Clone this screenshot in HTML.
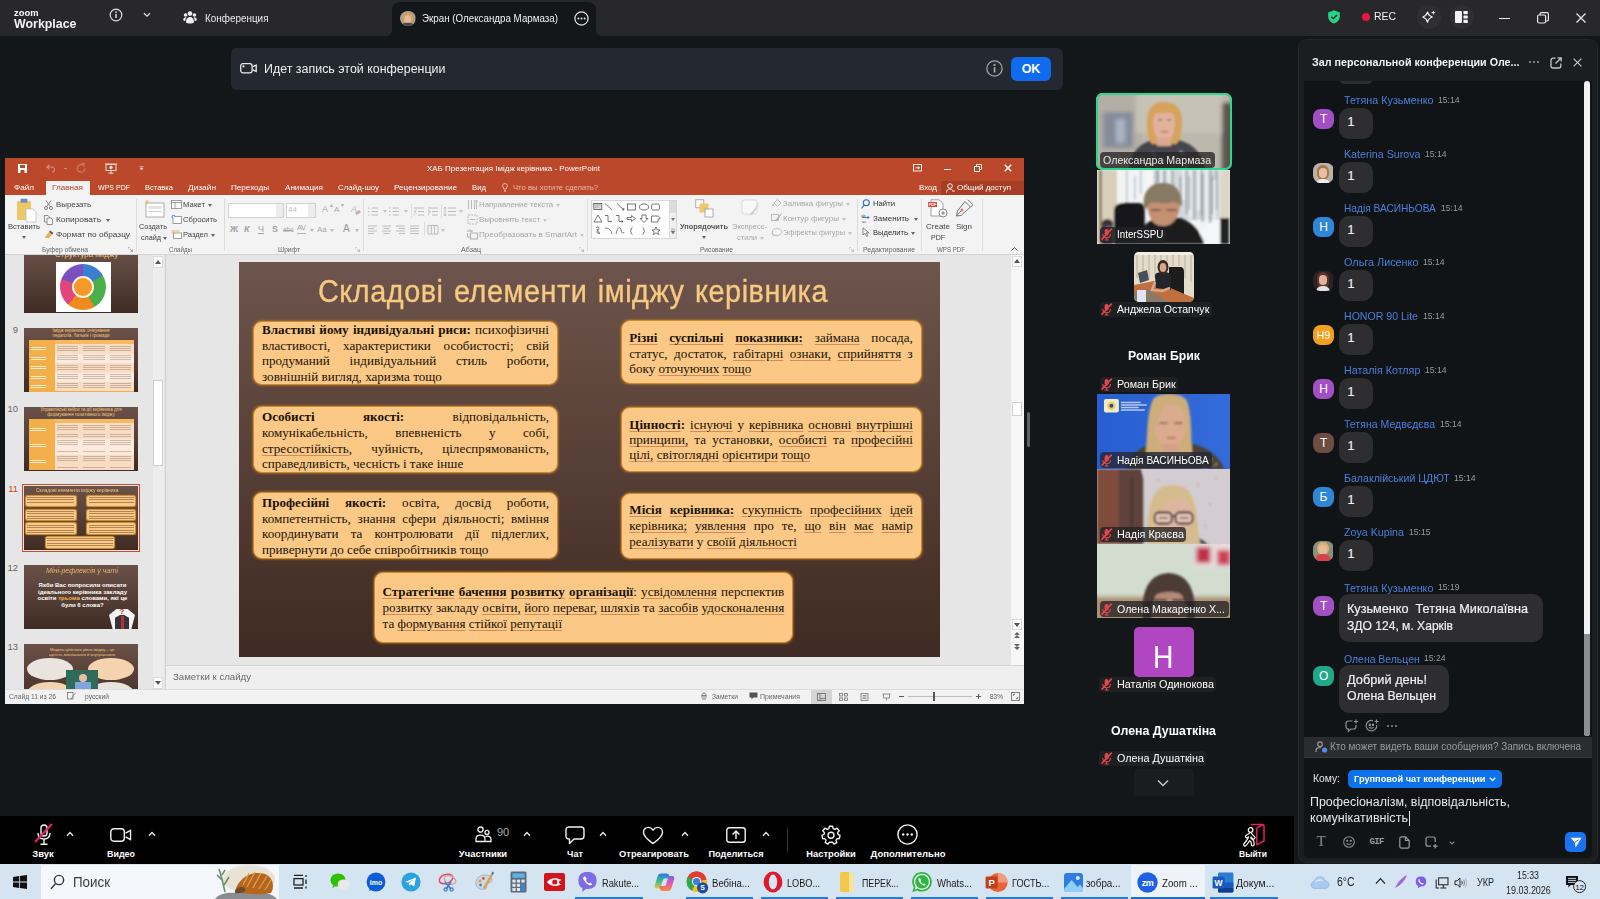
<!DOCTYPE html>
<html lang="ru"><head><meta charset="utf-8"><title>Zoom Workplace</title>
<style>
*{box-sizing:border-box;margin:0;padding:0}
html,body{width:1600px;height:899px;overflow:hidden;background:#14171a}
body{font-family:"Liberation Sans","DejaVu Sans",sans-serif;color:#fff;position:relative}
.a{position:absolute}
.t{position:absolute;white-space:nowrap;line-height:1}
svg{position:absolute;overflow:visible}
/* title bar */
#tb{left:0;top:0;width:1600px;height:36px;background:#28282b}
#tab{left:392px;top:2px;width:204px;height:34px;background:#14171a;border-radius:8px 8px 0 0}
.cb{width:24px;height:24px;border-radius:12px;background:#2f2f33}
/* notification */
#nt{left:231px;top:48px;width:832px;height:42px;background:#242831;border-radius:6px}
#ok{left:1011px;top:57px;width:40px;height:24px;background:#0f6cee;border-radius:6px;font-weight:bold;font-size:12.5px;text-align:center;line-height:25px}
/* bottom */
#bt{left:0;top:816px;width:1294px;height:48px;background:#000}
.bl{position:absolute;top:848px;font-size:9.5px;font-weight:bold;line-height:12px;white-space:nowrap;text-align:center;transform:translateX(-50%)}
#tk{left:0;top:864px;width:1600px;height:35px;background:#d5e4f1}
.tl{position:absolute;top:877px;font-size:10.5px;color:#1a1a1a;line-height:12px;white-space:nowrap}
.ul{position:absolute;top:896.5px;height:2.5px;background:#2a7ad8}
#pp{left:5px;top:158px;width:1019px;height:546px;background:#e6e6e6}
.pw{color:#fff;font-size:8px}
.rb{font-size:8px;color:#444}
.rg{font-size:8px;color:#a6a6a6}
.gl{font-size:7px;color:#666}
.sep{position:absolute;top:199px;width:1px;height:52px;background:#dcdcdc}
.th{position:absolute;left:24px;width:114px;height:64px;background:linear-gradient(#6b5249,#3f2b23);overflow:hidden}
.tn{position:absolute;left:0;width:13px;text-align:right;font-size:9.5px;color:#666;line-height:1}
.bx{position:absolute;background:#fbc985;border:1.5px solid #c98a2e;border-radius:9px;box-shadow:0 0 2px .6px rgba(195,125,38,.55)}
.sl{position:absolute;white-space:nowrap;font-family:"Liberation Serif","DejaVu Serif",serif;font-size:13.1px;line-height:15px;color:#1a1208;text-align:justify;text-align-last:justify}
.sl.e{text-align-last:left}
.sl u{text-decoration:underline;text-decoration-color:rgba(150,50,30,.4);text-decoration-thickness:1px;text-underline-offset:1.5px}
.tb1{position:absolute;background:#f3b04a}
.vl{position:absolute;left:1099px;height:15px;background:rgba(34,34,36,.78);border-radius:4px}
.vt{position:absolute;white-space:nowrap;font-size:10.8px;line-height:13px;color:#fff}
.vid{position:absolute;left:1097px;width:133px;overflow:hidden}
.vid div{position:absolute;filter:blur(1px)}
.cn{position:absolute;left:1344px;white-space:nowrap;font-size:10.5px;line-height:13px;color:#4b7fdb}
.ct{position:absolute;white-space:nowrap;font-size:9px;line-height:13px;color:#9b9b9b}
.cbub{position:absolute;left:1339px;background:#2e2e31;border-radius:10px}
.cav{position:absolute;left:1313.3px;width:20.5px;height:20px;border-radius:7.5px;overflow:hidden;color:#fff;font-size:12px;text-align:center;line-height:20px}
.cav div{position:absolute}
.cm{position:absolute;white-space:nowrap;font-size:12.5px;line-height:15px;color:#f0f0f0;-webkit-text-stroke:.2px #f0f0f0}
</style></head><body>
<!-- ===== Zoom title bar ===== -->
<div class="a" id="tb"></div>
<div class="t" style="transform:scaleX(0.9874);transform-origin:0 0;left:13.5px;top:7.75px;font-size:9.5px;font-weight:bold">zoom</div>
<div class="t" style="transform:scaleX(0.9921);transform-origin:0 0;left:13.5px;top:17.75px;font-size:12.5px;font-weight:bold;color:#f2f2f2">Workplace</div>
<svg style="left:109px;top:8px" width="14" height="14" viewBox="0 0 14 14"><circle cx="7" cy="7" r="5.8" fill="none" stroke="#ddd" stroke-width="1.2"/><rect x="6.3" y="6" width="1.5" height="4" fill="#ddd"/><circle cx="7" cy="4.2" r="0.9" fill="#ddd"/></svg>
<svg style="left:143px;top:12px" width="8" height="6" viewBox="0 0 8 6"><path d="M1 1.2 L4 4.2 L7 1.2" fill="none" stroke="#ddd" stroke-width="1.3"/></svg>
<svg style="left:183px;top:10px" width="14" height="14" viewBox="0 0 14 14" fill="#f0f0f0"><circle cx="7" cy="3.6" r="2.3"/><circle cx="2.6" cy="5" r="1.8"/><circle cx="11.4" cy="5" r="1.8"/><path d="M3 12.5 C3 8.5 5 7 7 7 C9 7 11 8.5 11 12.5 C9 13.8 5 13.8 3 12.5Z"/><path d="M0.2 10.2 C0.2 8 1.4 7.2 2.8 7.2 L3.4 7.6 C2.6 8.6 2.4 9.6 2.4 11 C1.4 11 0.6 10.7 0.2 10.2Z"/><path d="M13.8 10.2 C13.8 8 12.6 7.2 11.2 7.2 L10.6 7.6 C11.4 8.6 11.6 9.6 11.6 11 C12.6 11 13.4 10.7 13.8 10.2Z"/></svg>
<div class="t" style="transform:scaleX(0.9438);transform-origin:0 0;left:205px;top:13.25px;font-size:10.5px;color:#ececec">Конференция</div>
<div class="a" id="tab"></div>
<svg style="left:400px;top:10.5px;border-radius:8px;overflow:hidden" width="15.5" height="15.5" viewBox="0 0 16 16"><rect width="16" height="16" fill="#a79f94"/><ellipse cx="8" cy="7.6" rx="5.6" ry="6.4" fill="#d2a05c"/><ellipse cx="8" cy="8.6" rx="3.4" ry="4.3" fill="#e6b8a0"/><path d="M1 16 C2 12.5 5 12 8 12 C11 12 14 12.5 15 16Z" fill="#4a4850"/></svg>
<div class="a" style="left:386px;top:30px;width:6px;height:6px;background:radial-gradient(circle at 0 0,rgba(20,23,26,0) 5.6px,#14171a 6.2px)"></div>
<div class="a" style="left:596px;top:30px;width:6px;height:6px;background:radial-gradient(circle at 100% 0,rgba(20,23,26,0) 5.6px,#14171a 6.2px)"></div>
<div class="t" style="transform:scaleX(0.9314);transform-origin:0 0;left:421.5px;top:13.25px;font-size:10.5px;color:#f0f0f0">Экран (Олександра Мармаза)</div>
<svg style="left:574px;top:11px" width="15" height="15" viewBox="0 0 15 15"><circle cx="7.5" cy="7.5" r="6.6" fill="none" stroke="#e6e6e6" stroke-width="1.2"/><circle cx="4.4" cy="7.5" r="1" fill="#e6e6e6"/><circle cx="7.5" cy="7.5" r="1" fill="#e6e6e6"/><circle cx="10.6" cy="7.5" r="1" fill="#e6e6e6"/></svg>
<!-- right icons -->
<svg style="left:1327px;top:10px" width="14" height="14" viewBox="0 0 14 14"><path d="M7 0.3 L12.8 2.4 V6.6 C12.8 10 10.2 12.4 7 13.6 C3.8 12.4 1.2 10 1.2 6.6 V2.4Z" fill="#23d688"/><path d="M4.2 6.8 L6.3 8.8 L10 5" fill="none" stroke="#28282b" stroke-width="1.5"/></svg>
<div class="a" style="left:1362px;top:13px;width:8px;height:8px;border-radius:4px;background:#e8173d"></div>
<div class="t" style="transform:scaleX(0.9312);transform-origin:0 0;left:1373.5px;top:10.9px;font-size:11.2px;color:#f2f2f2">REC</div>
<div class="a cb" style="left:1417px;top:5px"></div>
<svg style="left:1421px;top:9px" width="16" height="16" viewBox="0 0 16 16"><path d="M6.5 3.2 C7.2 6 8 6.8 11.2 8 C8 9.2 7.2 10 6.5 13 C5.8 10 5 9.2 1.8 8 C5 6.8 5.8 6 6.5 3.2Z" fill="none" stroke="#f0f0f0" stroke-width="1.3" stroke-linejoin="round"/><path d="M12.3 1.2 L12.9 3 L14.7 3.6 L12.9 4.2 L12.3 6 L11.7 4.2 L9.9 3.6 L11.7 3Z" fill="#f0f0f0"/></svg>
<div class="a cb" style="left:1450px;top:5px"></div>
<svg style="left:1455px;top:11px" width="13" height="12" viewBox="0 0 13 12"><rect x="0" y="0" width="7" height="12" rx="1" fill="#f5f5f5"/><rect x="8.4" y="0" width="4.4" height="3.2" rx=".6" fill="#f5f5f5"/><rect x="8.4" y="4.4" width="4.4" height="3.2" rx=".6" fill="#f5f5f5"/><rect x="8.4" y="8.8" width="4.4" height="3.2" rx=".6" fill="#f5f5f5"/></svg>
<div class="a" style="left:1499px;top:17.5px;width:10.5px;height:1.3px;background:#e8e8e8"></div>
<svg style="left:1537px;top:12px" width="12" height="12" viewBox="0 0 12 12" fill="none" stroke="#e8e8e8" stroke-width="1.2"><rect x="0.6" y="3" width="8" height="8" rx="1.5"/><path d="M3 3 V2 C3 1.2 3.6 0.6 4.4 0.6 H10 C10.8 0.6 11.4 1.2 11.4 2 V7.6 C11.4 8.4 10.8 9 10 9 H8.6"/></svg>
<svg style="left:1576px;top:13px" width="10" height="10" viewBox="0 0 10 10"><path d="M0.5 0.5 L9.5 9.5 M9.5 0.5 L0.5 9.5" stroke="#e8e8e8" stroke-width="1.3"/></svg>
<!-- ===== notification ===== -->
<div class="a" id="nt"></div>
<svg style="left:240px;top:63px" width="17" height="10.5" viewBox="0 0 17 10.5" fill="none" stroke="#e8e8e8" stroke-width="1.3"><rect x="0.7" y="0.7" width="11.4" height="9.1" rx="2.2"/><path d="M12.6 3.9 L16.2 2 V8.5 L12.6 6.6"/><circle cx="3.5" cy="3.4" r="1.1" fill="#e8e8e8" stroke="none"/></svg>
<div class="t" style="transform:scaleX(0.9949);transform-origin:0 0;left:264px;top:62.75px;font-size:12.5px;color:#f0f0f0">Идет запись этой конференции</div>
<svg style="left:985.6px;top:59.8px" width="17" height="17" viewBox="0 0 16 16"><circle cx="8" cy="8" r="7.2" fill="none" stroke="#a4a4a4" stroke-width="1.2"/><rect x="7.3" y="6.8" width="1.5" height="5" fill="#b0b0b0"/><circle cx="8" cy="4.6" r="1" fill="#b0b0b0"/></svg>
<div class="a" id="ok">OK</div>
<!-- ===== PowerPoint window ===== -->
<div class="a" id="pp"></div>
<!-- thumbnails panel -->
<div class="a" style="left:5px;top:255px;width:160px;height:434px;overflow:hidden;background:#e6e6e6">
 <div class="a" style="left:0;top:-255px;width:160px;height:899px">
  <!-- slide 8 -->
  <div class="th" style="left:19px;top:249px"><div class="t" style="left:31px;top:2px;font-size:8px;color:#f2c47a">Структура іміджу</div><div class="a" style="left:32px;top:13px;width:55px;height:50px;background:#fff"></div>
   <div class="a" style="left:35.5px;top:14.5px;width:46px;height:46px;border-radius:23px;background:conic-gradient(#3a7fd0 0 60deg,#49b04a 60deg 150deg,#f08a1e 150deg 220deg,#e2457a 220deg 290deg,#7a4fc0 290deg 360deg)"></div>
   <div class="a" style="left:47.5px;top:26.5px;width:22px;height:22px;border-radius:11px;background:#f59a2a;border:2.5px solid #fff2e0"></div></div>
  <div class="tn" style="top:325px">9</div>
  <div class="th" style="left:19px;top:328px"><div class="t" style="left:19px;top:1.4px;font-size:4.5px;color:#f2c47a;line-height:4.8px;text-align:center;white-space:normal;width:76px">Імідж керівника: очікування педагогів, батьків і громади</div>
   <div class="tb1" style="left:5.2px;top:12px;width:104.6px;height:51.5px"></div>
   <div class="a" style="left:31px;top:12px;width:78.8px;height:4.4px;background:#f6b860"></div><div class="a" style="left:31px;top:16.4px;width:78.8px;height:9.4px;background:#f9dcc4"></div><div class="a" style="left:6.7px;top:19.2px;width:15.5px;height:3.8px;background:repeating-linear-gradient(180deg,rgba(255,255,255,.75) 0 .8px,transparent .8px 2.2px)"></div><div class="a" style="left:33px;top:17.7px;width:21.3px;height:6.6px;background:repeating-linear-gradient(180deg,rgba(90,60,40,.28) 0 .7px,transparent .7px 2.2px)"></div><div class="a" style="left:59.3px;top:17.7px;width:21.3px;height:6.6px;background:repeating-linear-gradient(180deg,rgba(90,60,40,.28) 0 .7px,transparent .7px 2.2px)"></div><div class="a" style="left:85.5px;top:17.7px;width:21.3px;height:6.6px;background:repeating-linear-gradient(180deg,rgba(90,60,40,.28) 0 .7px,transparent .7px 2.2px)"></div><div class="a" style="left:31px;top:25.8px;width:78.8px;height:9.4px;background:#fcebdd"></div><div class="a" style="left:6.7px;top:28.6px;width:15.5px;height:3.8px;background:repeating-linear-gradient(180deg,rgba(255,255,255,.75) 0 .8px,transparent .8px 2.2px)"></div><div class="a" style="left:33px;top:27.1px;width:21.3px;height:6.6px;background:repeating-linear-gradient(180deg,rgba(90,60,40,.28) 0 .7px,transparent .7px 2.2px)"></div><div class="a" style="left:59.3px;top:27.1px;width:21.3px;height:6.6px;background:repeating-linear-gradient(180deg,rgba(90,60,40,.28) 0 .7px,transparent .7px 2.2px)"></div><div class="a" style="left:85.5px;top:27.1px;width:21.3px;height:6.6px;background:repeating-linear-gradient(180deg,rgba(90,60,40,.28) 0 .7px,transparent .7px 2.2px)"></div><div class="a" style="left:31px;top:35.2px;width:78.8px;height:9.4px;background:#f9dcc4"></div><div class="a" style="left:6.7px;top:38.1px;width:15.5px;height:3.8px;background:repeating-linear-gradient(180deg,rgba(255,255,255,.75) 0 .8px,transparent .8px 2.2px)"></div><div class="a" style="left:33px;top:36.5px;width:21.3px;height:6.6px;background:repeating-linear-gradient(180deg,rgba(90,60,40,.28) 0 .7px,transparent .7px 2.2px)"></div><div class="a" style="left:59.3px;top:36.5px;width:21.3px;height:6.6px;background:repeating-linear-gradient(180deg,rgba(90,60,40,.28) 0 .7px,transparent .7px 2.2px)"></div><div class="a" style="left:85.5px;top:36.5px;width:21.3px;height:6.6px;background:repeating-linear-gradient(180deg,rgba(90,60,40,.28) 0 .7px,transparent .7px 2.2px)"></div><div class="a" style="left:31px;top:44.7px;width:78.8px;height:9.4px;background:#fcebdd"></div><div class="a" style="left:6.7px;top:47.5px;width:15.5px;height:3.8px;background:repeating-linear-gradient(180deg,rgba(255,255,255,.75) 0 .8px,transparent .8px 2.2px)"></div><div class="a" style="left:33px;top:46px;width:21.3px;height:6.6px;background:repeating-linear-gradient(180deg,rgba(90,60,40,.28) 0 .7px,transparent .7px 2.2px)"></div><div class="a" style="left:59.3px;top:46px;width:21.3px;height:6.6px;background:repeating-linear-gradient(180deg,rgba(90,60,40,.28) 0 .7px,transparent .7px 2.2px)"></div><div class="a" style="left:85.5px;top:46px;width:21.3px;height:6.6px;background:repeating-linear-gradient(180deg,rgba(90,60,40,.28) 0 .7px,transparent .7px 2.2px)"></div><div class="a" style="left:31px;top:54.1px;width:78.8px;height:9.4px;background:#f9dcc4"></div><div class="a" style="left:6.7px;top:56.9px;width:15.5px;height:3.8px;background:repeating-linear-gradient(180deg,rgba(255,255,255,.75) 0 .8px,transparent .8px 2.2px)"></div><div class="a" style="left:33px;top:55.4px;width:21.3px;height:6.6px;background:repeating-linear-gradient(180deg,rgba(90,60,40,.28) 0 .7px,transparent .7px 2.2px)"></div><div class="a" style="left:59.3px;top:55.4px;width:21.3px;height:6.6px;background:repeating-linear-gradient(180deg,rgba(90,60,40,.28) 0 .7px,transparent .7px 2.2px)"></div><div class="a" style="left:85.5px;top:55.4px;width:21.3px;height:6.6px;background:repeating-linear-gradient(180deg,rgba(90,60,40,.28) 0 .7px,transparent .7px 2.2px)"></div></div>
  <div class="tn" style="top:404px">10</div>
  <div class="th" style="left:19px;top:407px"><div class="t" style="left:15px;top:1.4px;font-size:4.5px;color:#f2c47a;line-height:4.8px;text-align:center;white-space:normal;width:84px">Управлінські кейси та дії керівника для формування позитивного іміджу</div>
   <div class="tb1" style="left:4.8px;top:11.8px;width:105px;height:51.7px"></div>
   <div class="a" style="left:31px;top:11.8px;width:78.8px;height:4.4px;background:#f6b860"></div><div class="a" style="left:31px;top:16.2px;width:78.8px;height:15.8px;background:#f9dcc4"></div><div class="a" style="left:6.3px;top:20.9px;width:15.7px;height:4.4px;background:repeating-linear-gradient(180deg,rgba(255,255,255,.75) 0 .8px,transparent .8px 2.2px)"></div><div class="a" style="left:33px;top:17.5px;width:21.3px;height:13px;background:repeating-linear-gradient(180deg,rgba(90,60,40,.28) 0 .7px,transparent .7px 2.2px)"></div><div class="a" style="left:59.3px;top:17.5px;width:21.3px;height:13px;background:repeating-linear-gradient(180deg,rgba(90,60,40,.28) 0 .7px,transparent .7px 2.2px)"></div><div class="a" style="left:85.5px;top:17.5px;width:21.3px;height:13px;background:repeating-linear-gradient(180deg,rgba(90,60,40,.28) 0 .7px,transparent .7px 2.2px)"></div><div class="a" style="left:31px;top:32px;width:78.8px;height:15.8px;background:#fcebdd"></div><div class="a" style="left:6.3px;top:36.7px;width:15.7px;height:4.4px;background:repeating-linear-gradient(180deg,rgba(255,255,255,.75) 0 .8px,transparent .8px 2.2px)"></div><div class="a" style="left:33px;top:33.3px;width:21.3px;height:13px;background:repeating-linear-gradient(180deg,rgba(90,60,40,.28) 0 .7px,transparent .7px 2.2px)"></div><div class="a" style="left:59.3px;top:33.3px;width:21.3px;height:13px;background:repeating-linear-gradient(180deg,rgba(90,60,40,.28) 0 .7px,transparent .7px 2.2px)"></div><div class="a" style="left:85.5px;top:33.3px;width:21.3px;height:13px;background:repeating-linear-gradient(180deg,rgba(90,60,40,.28) 0 .7px,transparent .7px 2.2px)"></div><div class="a" style="left:31px;top:47.7px;width:78.8px;height:15.8px;background:#f9dcc4"></div><div class="a" style="left:6.3px;top:52.5px;width:15.7px;height:4.4px;background:repeating-linear-gradient(180deg,rgba(255,255,255,.75) 0 .8px,transparent .8px 2.2px)"></div><div class="a" style="left:33px;top:49px;width:21.3px;height:13px;background:repeating-linear-gradient(180deg,rgba(90,60,40,.28) 0 .7px,transparent .7px 2.2px)"></div><div class="a" style="left:59.3px;top:49px;width:21.3px;height:13px;background:repeating-linear-gradient(180deg,rgba(90,60,40,.28) 0 .7px,transparent .7px 2.2px)"></div><div class="a" style="left:85.5px;top:49px;width:21.3px;height:13px;background:repeating-linear-gradient(180deg,rgba(90,60,40,.28) 0 .7px,transparent .7px 2.2px)"></div></div>
  <div class="tn" style="top:484px;color:#d24726">11</div>
  <div class="a" style="left:16.5px;top:483.7px;width:118.5px;height:68.5px;border:1.6px solid #d4482a"></div>
  <div class="th" style="left:19px;top:486px"><div class="t" style="transform:scaleX(0.9439);transform-origin:0 0;left:12.2px;top:1.5px;font-size:5.2px;color:#f2c47a">Складові елементи іміджу керівника</div>
   <div class="a" style="left:1.5px;top:9.5px;width:50.2px;height:10px;background:#fbc985;border-radius:2px;box-shadow:0 0 1px .5px #d9952f"></div><div class="a" style="left:3px;top:11.1px;width:47.2px;height:7px;background:repeating-linear-gradient(180deg,rgba(70,40,20,.42) 0 .8px,transparent .8px 2.4px)"></div><div class="a" style="left:63px;top:9.5px;width:48px;height:10px;background:#fbc985;border-radius:2px;box-shadow:0 0 1px .5px #d9952f"></div><div class="a" style="left:64.5px;top:11.1px;width:45px;height:7px;background:repeating-linear-gradient(180deg,rgba(70,40,20,.42) 0 .8px,transparent .8px 2.4px)"></div><div class="a" style="left:1.5px;top:23.5px;width:50.2px;height:10.5px;background:#fbc985;border-radius:2px;box-shadow:0 0 1px .5px #d9952f"></div><div class="a" style="left:3px;top:25.1px;width:47.2px;height:7.5px;background:repeating-linear-gradient(180deg,rgba(70,40,20,.42) 0 .8px,transparent .8px 2.4px)"></div><div class="a" style="left:63px;top:23.5px;width:48px;height:10.5px;background:#fbc985;border-radius:2px;box-shadow:0 0 1px .5px #d9952f"></div><div class="a" style="left:64.5px;top:25.1px;width:45px;height:7.5px;background:repeating-linear-gradient(180deg,rgba(70,40,20,.42) 0 .8px,transparent .8px 2.4px)"></div><div class="a" style="left:1.5px;top:37.2px;width:50.2px;height:11.2px;background:#fbc985;border-radius:2px;box-shadow:0 0 1px .5px #d9952f"></div><div class="a" style="left:3px;top:38.800000000000004px;width:47.2px;height:8.2px;background:repeating-linear-gradient(180deg,rgba(70,40,20,.42) 0 .8px,transparent .8px 2.4px)"></div><div class="a" style="left:63px;top:37.2px;width:48px;height:11.2px;background:#fbc985;border-radius:2px;box-shadow:0 0 1px .5px #d9952f"></div><div class="a" style="left:64.5px;top:38.800000000000004px;width:45px;height:8.2px;background:repeating-linear-gradient(180deg,rgba(70,40,20,.42) 0 .8px,transparent .8px 2.4px)"></div><div class="a" style="left:21.8px;top:50.8px;width:68.7px;height:11.4px;background:#fbc985;border-radius:2px;box-shadow:0 0 1px .5px #d9952f"></div><div class="a" style="left:23.3px;top:52.4px;width:65.7px;height:8.4px;background:repeating-linear-gradient(180deg,rgba(70,40,20,.42) 0 .8px,transparent .8px 2.4px)"></div></div>
  <div class="tn" style="top:563px">12</div>
  <div class="th" style="left:19px;top:565px"><div class="t" style="transform:scaleX(1.0969);transform-origin:0 0;left:22px;top:3px;font-size:6.5px;color:#e9b36e;font-style:italic">Міні-рефлексія у чаті</div>
   <div class="t" style="left:8.5px;top:16.6px;font-size:6px;color:#fff;line-height:6.9px;text-align:center;width:100px;font-weight:bold">Якби Вас попросили описати<br>ідеального керівника закладу<br>освіти <span style="color:#f3b04a">трьома</span> словами, які це<br>були 6 слова?</div>
   <div class="a" style="left:85px;top:44px;width:26px;height:20px;background:#f4f4f4;clip-path:polygon(0 30%,28% 0,72% 0,100% 30%,86% 100%,14% 100%)"></div><div class="a" style="left:91px;top:50px;width:14px;height:14px;background:#34343a;clip-path:polygon(0 20%,35% 0,65% 0,100% 20%,100% 100%,0 100%)"></div><div class="a" style="left:96.5px;top:51px;width:3px;height:13px;background:#b8303a"></div><div class="t" style="left:95.5px;top:43px;font-size:8px;color:#d01c1c;font-weight:bold">?</div></div>
  <div class="tn" style="top:642px">13</div>
  <div class="th" style="left:19px;top:644px"><div class="t" style="left:20px;top:3px;font-size:4px;color:#f2c47a;line-height:5px;text-align:center;white-space:normal;width:76px">Модель цілісного рівня іміджу – це єдність зовнішнього й внутрішнього</div>
   <div class="a" style="left:3px;top:14px;width:46px;height:22px;border-radius:23px/11px;background:#e9e4de"></div><div class="a" style="left:64px;top:14px;width:46px;height:22px;border-radius:23px/11px;background:#f5d3ae"></div>
   <div class="a" style="left:3px;top:38px;width:46px;height:22px;border-radius:23px/11px;background:#f5d3ae"></div><div class="a" style="left:64px;top:38px;width:46px;height:22px;border-radius:23px/11px;background:#e9e4de"></div>
   <div class="a" style="left:42px;top:26px;width:32px;height:22px;background:#2f6b58"></div><div class="a" style="left:55px;top:30px;width:8px;height:8px;border-radius:4px;background:#e8c0a0"></div><div class="a" style="left:51px;top:38px;width:16px;height:10px;background:#7ea6d8"></div></div>
 </div>
</div>
<!-- thumb scrollbar -->
<div class="a" style="left:153px;top:255px;width:11px;height:434px;background:#ededed"></div>
<div class="a" style="left:153px;top:380px;width:10px;height:86px;background:#fff;border:1px solid #cfcfcf"></div>
<div class="a" style="left:153px;top:256px;width:10px;height:12px;background:#fdfdfd;border:1px solid #dadada"></div>
<svg style="left:155px;top:260px" width="6" height="4" viewBox="0 0 6 4"><path d="M0 4 L3 0 L6 4Z" fill="#555"/></svg>
<div class="a" style="left:153px;top:677px;width:10px;height:12px;background:#fdfdfd;border:1px solid #dadada"></div>
<svg style="left:155px;top:681px" width="6" height="4" viewBox="0 0 6 4"><path d="M0 0 L3 4 L6 0Z" fill="#555"/></svg>
<div class="a" style="left:165px;top:255px;width:1px;height:434px;background:#d0d0d0"></div>
<div class="a" style="left:1027px;top:412px;width:3px;height:35px;border-radius:2px;background:#5d6066"></div>
<!-- slide -->
<div class="a" style="left:239px;top:262px;width:701px;height:395px;background:linear-gradient(#6d544c 0%,#5e463d 35%,#4a342b 75%,#3f2b23 100%)"></div>
<div class="t" style="transform:scaleX(0.9294);transform-origin:0 0;left:317.5px;top:275.8px;font-size:31px;color:#f8c980;-webkit-text-stroke:.35px #f8c980;letter-spacing:.6px;word-spacing:2px">Складові елементи іміджу керівника</div>
<div class="bx" style="left:253px;top:320.5px;width:304.5px;height:64px"></div>
<div class="sl" style="left:262px;top:321.8px;width:287px;"><b>Властиві йому індивідуальні риси:</b> психофізичні</div>
<div class="sl" style="left:262px;top:337.5px;width:287px;">властивості, характеристики особистості; свій</div>
<div class="sl" style="left:262px;top:353.2px;width:287px;">продуманий індивідуальний стиль роботи,</div>
<div class="sl e" style="left:262px;top:368.9px;">зовнішній вигляд, харизма тощо</div>
<div class="bx" style="left:253px;top:405.75px;width:304.5px;height:67.5px"></div>
<div class="sl" style="left:262px;top:409.2px;width:287px;"><b>Особисті якості:</b> відповідальність,</div>
<div class="sl" style="left:262px;top:425px;width:287px;">комунікабельність, впевненість у собі,</div>
<div class="sl" style="left:262px;top:440.7px;width:287px;"><u>стресостійкість</u>, чуйність, цілеспрямованість,</div>
<div class="sl e" style="left:262px;top:456.4px;">справедливість, чесність і таке інше</div>
<div class="bx" style="left:253px;top:492px;width:304.5px;height:67.2px"></div>
<div class="sl" style="left:262px;top:495px;width:287px;"><b>Професійні якості:</b> освіта, досвід роботи,</div>
<div class="sl" style="left:262px;top:510.6px;width:287px;">компетентність, знання сфери діяльності; вміння</div>
<div class="sl" style="left:262px;top:526.3px;width:287px;">координувати та контролювати дії підлеглих,</div>
<div class="sl e" style="left:262px;top:542.1px;">привернути до себе співробітників тощо</div>
<div class="bx" style="left:620.8px;top:320.25px;width:301.1px;height:64.1px"></div>
<div class="sl" style="left:629.3px;top:330.3px;width:283.5px;"><b><u>Різні</u> <u>суспільні</u> <u>показники:</u></b> <u>займана</u> посада,</div>
<div class="sl" style="left:629.3px;top:346px;width:283.5px;">статус, достаток, <u>габітарні</u> <u>ознаки,</u> <u>сприйняття</u> з</div>
<div class="sl e" style="left:629.3px;top:361.2px;">боку <u>оточуючих</u> <u>тощо</u></div>
<div class="bx" style="left:620.8px;top:407px;width:301.1px;height:65px"></div>
<div class="sl" style="left:629.3px;top:416.7px;width:283.5px;"><b><u>Цінності</u>:</b> <u>існуючі</u> у <u>керівника</u> <u>основні</u> <u>внутрішні</u></div>
<div class="sl" style="left:629.3px;top:432.3px;width:283.5px;"><u>принципи,</u> та установки, <u>особисті</u> та <u>професійні</u></div>
<div class="sl e" style="left:629.3px;top:447.4px;"><u>цілі,</u> <u>світоглядні</u> <u>орієнтири</u> <u>тощо</u></div>
<div class="bx" style="left:620.8px;top:493px;width:301.1px;height:65.8px"></div>
<div class="sl" style="left:629.3px;top:502.2px;width:283.5px;"><b><u>Місія</u> <u>керівника:</u></b> <u>сукупність</u> <u>професійних</u> <u>ідей</u></div>
<div class="sl" style="left:629.3px;top:518.2px;width:283.5px;"><u>керівника;</u> <u>уявлення</u> про те, <u>що</u> <u>він</u> <u>має</u> <u>намір</u></div>
<div class="sl e" style="left:629.3px;top:533.6px;"><u>реалізувати</u> у <u>своїй</u> <u>діяльності</u></div>
<div class="bx" style="left:374px;top:572px;width:419px;height:71px"></div>
<div class="sl" style="left:382.5px;top:583.5px;width:401.7px;"><b><u>Стратегічне</u> <u>бачення</u> <u>розвитку</u> <u>організації</u></b>: <u>усвідомлення</u> перспектив</div>
<div class="sl" style="left:382.5px;top:599.6px;width:401.7px;"><u>розвитку</u> закладу <u>освіти,</u> <u>його</u> <u>переваг,</u> <u>шляхів</u> та <u>засобів</u> <u>удосконалення</u></div>
<div class="sl e" style="left:382.5px;top:615.5px;">та <u>формування</u> <u>стійкої</u> <u>репутації</u></div>
<!-- main area scrollbar -->
<div class="a" style="left:1011px;top:255px;width:13px;height:410px;background:#f7f7f7"></div>
<div class="a" style="left:1012px;top:256px;width:10px;height:11px;background:#fdfdfd;border:1px solid #dadada"></div>
<svg style="left:1014px;top:259px" width="6" height="4" viewBox="0 0 6 4"><path d="M0 4 L3 0 L6 4Z" fill="#555"/></svg>
<div class="a" style="left:1012px;top:402px;width:10px;height:14px;background:#fff;border:1px solid #cfcfcf"></div>
<div class="a" style="left:1012px;top:619px;width:10px;height:11px;background:#fdfdfd;border:1px solid #dadada"></div>
<svg style="left:1014px;top:623px" width="6" height="4" viewBox="0 0 6 4"><path d="M0 0 L3 4 L6 0Z" fill="#555"/></svg>
<svg style="left:1014px;top:632px" width="6" height="6" viewBox="0 0 6 6"><path d="M0 3 L3 0 L6 3Z M0 6 L3 3 L6 6Z" fill="#666"/></svg>
<svg style="left:1014px;top:644px" width="6" height="6" viewBox="0 0 6 6"><path d="M0 0 L3 3 L6 0Z M0 3 L3 6 L6 3Z" fill="#666"/></svg>
<!-- notes + status -->
<div class="a" style="left:166px;top:665px;width:858px;height:24px;background:#efefef;border-top:1px solid #d6d6d6"></div>
<div class="t" style="transform:scaleX(1.1327);transform-origin:0 0;left:173px;top:673px;font-size:8.5px;color:#6a6a6a">Заметки к слайду</div>
<div class="a" style="left:5px;top:689px;width:1019px;height:15px;background:#f2f2f2;border-top:1px solid #dcdcdc"></div>
<div class="t gl" style="transform:scaleX(0.9583);transform-origin:0 0;left:9px;top:693px">Слайд 11 из 26</div>
<svg style="left:67px;top:692px" width="9" height="8" viewBox="0 0 9 8" fill="none" stroke="#777" stroke-width=".8"><rect x=".5" y=".5" width="5.5" height="6.5"/><path d="M4 7 L8.5 1"/></svg>
<div class="t gl" style="transform:scaleX(0.9552);transform-origin:0 0;left:85px;top:693px">русский</div>
<svg style="left:700px;top:692px" width="8" height="8" viewBox="0 0 8 8" fill="none" stroke="#666" stroke-width=".8"><path d="M1 5 H7 M2 7 H6 M4 0.5 L6.5 3.5 H1.5Z"/></svg>
<div class="t gl" style="transform:scaleX(0.9708);transform-origin:0 0;left:712px;top:693px">Заметки</div>
<svg style="left:749px;top:692px" width="9" height="8" viewBox="0 0 9 8"><path d="M0.5 0.5 H8.5 V5.5 H4.5 L2.5 7.5 V5.5 H0.5Z" fill="#555"/></svg>
<div class="t gl" style="transform:scaleX(0.9896);transform-origin:0 0;left:760px;top:693px">Примечания</div>
<div class="a" style="left:811px;top:690px;width:21px;height:14px;background:#d4d4d4"></div>
<svg style="left:817px;top:693px" width="9" height="8" viewBox="0 0 9 8" fill="none" stroke="#666" stroke-width=".8"><rect x=".5" y=".5" width="8" height="7"/><path d="M3 .5 V7.5 M3 5.5 H8.5"/></svg>
<svg style="left:839px;top:693px" width="9" height="8" viewBox="0 0 9 8" fill="none" stroke="#777" stroke-width=".8"><rect x=".5" y=".5" width="3" height="2.5"/><rect x="5.5" y=".5" width="3" height="2.5"/><rect x=".5" y="5" width="3" height="2.5"/><rect x="5.5" y="5" width="3" height="2.5"/></svg>
<svg style="left:860px;top:693px" width="9" height="8" viewBox="0 0 9 8" fill="none" stroke="#777" stroke-width=".8"><rect x="1" y=".5" width="7" height="7"/><path d="M2.5 2.5 H6.5 M2.5 4 H6.5 M2.5 5.5 H6.5"/></svg>
<svg style="left:882px;top:693px" width="9" height="8" viewBox="0 0 9 8" fill="none" stroke="#777" stroke-width=".8"><path d="M0.5 1 H8.5 M1.5 1 V5 H7.5 V1 M4.5 5 V7.5"/></svg>
<div class="a" style="left:899px;top:696px;width:5px;height:1px;background:#555"></div>
<div class="a" style="left:908px;top:696px;width:64px;height:1px;background:#bdbdbd"></div>
<div class="a" style="left:933px;top:692px;width:2px;height:9px;background:#555"></div>
<div class="a" style="left:976px;top:696px;width:5px;height:1px;background:#555"></div><div class="a" style="left:978px;top:694px;width:1px;height:5px;background:#555"></div>
<div class="t gl" style="transform:scaleX(0.9275);transform-origin:0 0;left:990px;top:693px">83%</div>
<svg style="left:1011px;top:692px" width="9" height="9" viewBox="0 0 9 9" fill="none" stroke="#666" stroke-width=".8"><rect x=".5" y=".5" width="8" height="8"/><path d="M2.5 4 V2.5 H4 M6.5 5 V6.5 H5"/></svg>
<!-- title row -->
<div class="a" style="left:5px;top:158px;width:1019px;height:37.5px;background:#bb482b"></div>
<svg style="left:18px;top:164px" width="9" height="9" viewBox="0 0 9 9"><path d="M0 0 H9 V9 H0Z" fill="#fff"/><rect x="2" y="1" width="5" height="3" fill="#b7472a"/><rect x="2.5" y="6" width="4" height="3" fill="#b7472a"/></svg>
<svg style="left:46px;top:164px" width="12" height="9" viewBox="0 0 12 9" fill="none" stroke="#d98a76" stroke-width="1.2"><path d="M1 3 H5.5 C7.5 3 8.5 4.2 8.5 5.8 C8.5 7.2 7.5 8.2 6 8.2 M3.5 0.8 L1 3 L3.5 5.4"/></svg>
<div class="a" style="left:64px;top:168px;width:3px;height:1px;background:#d98a76"></div>
<svg style="left:76px;top:163px" width="10" height="10" viewBox="0 0 10 10" fill="none" stroke="#d07a64" stroke-width="1.2"><path d="M7 2.2 A3.8 3.8 0 1 0 8.8 5.4 M5.2 0.6 H8 V3.4"/></svg>
<svg style="left:105px;top:163px" width="12" height="11" viewBox="0 0 12 11" fill="none" stroke="#f3d9d1" stroke-width="1"><rect x="1" y="1.5" width="10" height="6"/><path d="M0 1 H12 M6 7.5 V10 M3.5 10.2 H8.5"/><circle cx="6" cy="4.5" r="1.3" fill="#f3d9d1"/></svg>
<svg style="left:139px;top:166px" width="5" height="5" viewBox="0 0 5 5"><path d="M0.5 0.5 H4.5 M1 2 L2.5 4 L4 2Z" fill="#f3d9d1" stroke="#f3d9d1" stroke-width=".6"/></svg>
<div class="t pw" style="transform:scaleX(0.9943);transform-origin:0 0;left:427px;top:165px">ХАБ Презентация Імідж керівника - PowerPoint</div>
<svg style="left:913px;top:164px" width="9" height="8" viewBox="0 0 9 8" fill="none" stroke="#fff" stroke-width=".9"><rect x=".5" y=".5" width="8" height="6.5"/><path d="M2.5 3.8 H6.5 M5 2.5 L6.5 3.8 L5 5.2"/></svg>
<div class="a" style="left:944px;top:169px;width:7px;height:1px;background:#fff"></div>
<svg style="left:974px;top:164px" width="8" height="8" viewBox="0 0 8 8" fill="none" stroke="#fff" stroke-width=".9"><rect x=".5" y="2.5" width="5" height="5"/><path d="M2.5 2.5 V.5 H7.5 V5.5 H5.5"/></svg>
<svg style="left:1004px;top:164px" width="8" height="8" viewBox="0 0 8 8"><path d="M.8 .8 L7.2 7.2 M7.2 .8 L.8 7.2" stroke="#fff" stroke-width="1.4"/></svg>
<!-- tabs row -->
<div class="a" style="left:46px;top:180.5px;width:44px;height:15.5px;background:#f3f3f3"></div>
<div class="t pw" style="transform:scaleX(1.0167);transform-origin:0 0;left:14px;top:184px">Файл</div>
<div class="t pw" style="transform:scaleX(1.0180);transform-origin:0 0;left:52px;top:184px;color:#b7472a">Главная</div>
<div class="t pw" style="transform:scaleX(0.8778);transform-origin:0 0;left:98px;top:184px">WPS PDF</div>
<div class="t pw" style="transform:scaleX(0.9417);transform-origin:0 0;left:145px;top:184px">Вставка</div>
<div class="t pw" style="transform:scaleX(1.0413);transform-origin:0 0;left:188px;top:184px">Дизайн</div>
<div class="t pw" style="transform:scaleX(1.0125);transform-origin:0 0;left:231px;top:184px">Переходы</div>
<div class="t pw" style="transform:scaleX(1.0116);transform-origin:0 0;left:285px;top:184px">Анимация</div>
<div class="t pw" style="transform:scaleX(0.9883);transform-origin:0 0;left:338px;top:184px">Слайд-шоу</div>
<div class="t pw" style="transform:scaleX(1.0197);transform-origin:0 0;left:394px;top:184px">Рецензирование</div>
<div class="t pw" style="transform:scaleX(0.9666);transform-origin:0 0;left:472px;top:184px">Вид</div>
<svg style="left:502px;top:183px" width="6" height="9" viewBox="0 0 6 9" fill="none" stroke="#f0cfc5" stroke-width=".8"><path d="M3 .6 C4.5 .6 5.4 1.6 5.4 2.8 C5.4 4 4.2 4.6 4.2 6 H1.8 C1.8 4.6 .6 4 .6 2.8 C.6 1.6 1.5 .6 3 .6Z M2 7.4 H4 M2.3 8.5 H3.7"/></svg>
<div class="t pw" style="transform:scaleX(0.9611);transform-origin:0 0;left:513px;top:184px;color:#e9b9ab">Что вы хотите сделать?</div>
<div class="t pw" style="transform:scaleX(0.9940);transform-origin:0 0;left:919px;top:184px">Вход</div>
<div class="a" style="left:941px;top:181px;width:83px;height:14.5px;background:#a63e23"></div>
<svg style="left:946px;top:183px" width="9" height="10" viewBox="0 0 9 10" fill="none" stroke="#fff" stroke-width=".9"><circle cx="4" cy="3" r="2.3"/><path d="M.5 9.5 C.5 7 2 6 4 6 C5 6 5.8 6.3 6.4 6.8 M6 8 H8.8"/></svg>
<div class="t pw" style="transform:scaleX(1.0047);transform-origin:0 0;left:957px;top:184px">Общий доступ</div>
<!-- ribbon -->
<div class="a" style="left:5px;top:195px;width:1019px;height:60px;background:#f3f3f3;border-bottom:1px solid #d4d4d4"></div>
<div class="sep" style="left:136px"></div><div class="sep" style="left:224px"></div><div class="sep" style="left:363px"></div><div class="sep" style="left:587px"></div><div class="sep" style="left:857px"></div><div class="sep" style="left:921px"></div><div class="sep" style="left:982px"></div>
<!-- clipboard -->
<svg style="left:16px;top:198px" width="21" height="25" viewBox="0 0 21 25"><rect x="1" y="3" width="14" height="19" rx="1" fill="#eec868"/><rect x="4.5" y=".8" width="7" height="4" rx="1" fill="#6a8fc4"/><path d="M10 11 H17 L20 14 V24 H10Z" fill="#fff" stroke="#b8b8b8" stroke-width=".7"/></svg>
<div class="t rb" style="transform:scaleX(0.9433);transform-origin:0 0;left:8px;top:223px">Вставить</div>
<svg style="left:22px;top:236px" width="4" height="3" viewBox="0 0 4 3"><path d="M0 0 H4 L2 3Z" fill="#666"/></svg>
<svg style="left:44px;top:200px" width="9" height="10" viewBox="0 0 9 10" fill="none" stroke="#777" stroke-width=".9"><path d="M2 .5 L6.5 7 M7 .5 L2.5 7"/><circle cx="2" cy="8" r="1.5"/><circle cx="7" cy="8" r="1.5"/></svg>
<div class="t rb" style="transform:scaleX(0.9833);transform-origin:0 0;left:56px;top:201px">Вырезать</div>
<svg style="left:44px;top:215px" width="9" height="10" viewBox="0 0 9 10" fill="#f8f8f8" stroke="#777" stroke-width=".8"><path d="M.5 .5 H4 L5.5 2 V7 H.5Z"/><path d="M3 3 H7 L8.5 4.5 V9.5 H3Z"/></svg>
<div class="t rb" style="transform:scaleX(1.0446);transform-origin:0 0;left:56px;top:216px">Копировать</div>
<svg style="left:106px;top:219px" width="4" height="3" viewBox="0 0 4 3"><path d="M0 0 H4 L2 3Z" fill="#666"/></svg>
<svg style="left:44px;top:230px" width="10" height="9" viewBox="0 0 10 9"><path d="M6 .5 L9.5 3 L8 4.5 L5 2Z" fill="#555"/><path d="M5 2 L8 4.5 L4.5 8.5 L.5 7.5Z" fill="#e7b24c"/></svg>
<div class="t rb" style="transform:scaleX(1.0316);transform-origin:0 0;left:56px;top:231px">Формат по образцу</div>
<div class="t gl" style="transform:scaleX(0.9668);transform-origin:0 0;left:42px;top:246px">Буфер обмена</div>
<svg style="left:128px;top:247px" width="5" height="5" viewBox="0 0 5 5" fill="none" stroke="#888" stroke-width=".7"><path d="M.5 .5 H1.5 M.5 .5 V1.5 M2 2 L4.5 4.5 M4.5 2.5 V4.5 H2.5"/></svg>
<!-- slides -->
<svg style="left:144px;top:199px" width="21" height="19" viewBox="0 0 21 19"><rect x="2" y="4" width="18" height="14" fill="#fff" stroke="#9a9a9a" stroke-width=".8"/><rect x="4.5" y="7" width="13" height="3" fill="#e3e3e3"/><rect x="4.5" y="12" width="13" height="1" fill="#ccc"/><path d="M3 0 L3.8 2.2 L6 3 L3.8 3.8 L3 6 L2.2 3.8 L0 3 L2.2 2.2Z" fill="#f0c060"/></svg>
<div class="t rb" style="transform:scaleX(0.9209);transform-origin:0 0;left:139px;top:223px">Создать</div>
<div class="t rb" style="transform:scaleX(0.8982);transform-origin:0 0;left:141px;top:234px">слайд</div>
<svg style="left:163px;top:237px" width="4" height="3" viewBox="0 0 4 3"><path d="M0 0 H4 L2 3Z" fill="#666"/></svg>
<svg style="left:171px;top:200px" width="11" height="9" viewBox="0 0 11 9" fill="#fff" stroke="#888" stroke-width=".8"><rect x=".5" y=".5" width="10" height="8"/><path d="M.5 2.5 H10.5 M4 2.5 V8.5"/></svg>
<div class="t rb" style="transform:scaleX(0.9717);transform-origin:0 0;left:183px;top:201px">Макет</div>
<svg style="left:208px;top:204px" width="4" height="3" viewBox="0 0 4 3"><path d="M0 0 H4 L2 3Z" fill="#666"/></svg>
<svg style="left:171px;top:215px" width="11" height="9" viewBox="0 0 11 9" fill="#fff" stroke="#888" stroke-width=".8"><rect x="2" y="1.5" width="8.5" height="7"/><path d="M4 .5 L1 .8 L1.3 3.5" stroke="#3a6ea8"/></svg>
<div class="t rb" style="transform:scaleX(0.9561);transform-origin:0 0;left:183px;top:216px">Сбросить</div>
<svg style="left:171px;top:230px" width="11" height="9" viewBox="0 0 11 9" fill="#fff" stroke="#888" stroke-width=".8"><rect x="2.5" y="3" width="8" height="5.5"/><path d="M.5 1 H8.5 M.5 3 H2.5" stroke="#e0a040"/></svg>
<div class="t rb" style="transform:scaleX(0.9451);transform-origin:0 0;left:183px;top:231px">Раздел</div>
<svg style="left:211px;top:234px" width="4" height="3" viewBox="0 0 4 3"><path d="M0 0 H4 L2 3Z" fill="#666"/></svg>
<div class="t gl" style="transform:scaleX(0.8825);transform-origin:0 0;left:169px;top:246px">Слайды</div>
<!-- font -->
<div class="a" style="left:228px;top:203px;width:56px;height:15px;background:#fff;border:1px solid #d2d2d2"></div>
<div class="a" style="left:276px;top:204px;width:7px;height:13px;background:#ededed"></div>
<div class="a" style="left:286px;top:203px;width:30px;height:15px;background:#fff;border:1px solid #d2d2d2"></div>
<div class="a" style="left:308px;top:204px;width:7px;height:13px;background:#ededed"></div>
<div class="t" style="left:288px;top:206px;font-size:8px;color:#bdbdbd">44</div>
<div class="t" style="left:322px;top:205px;font-size:9px;color:#a8a8a8">A</div><div class="t" style="left:329px;top:203px;font-size:5px;color:#a8a8a8">▲</div>
<div class="t" style="left:334px;top:206px;font-size:8px;color:#a8a8a8">A</div><div class="t" style="left:340px;top:203px;font-size:5px;color:#a8a8a8">▼</div>
<div class="t" style="left:351px;top:205px;font-size:9px;color:#b8b8b8;font-style:italic">A</div><svg style="left:355px;top:210px" width="6" height="5" viewBox="0 0 6 5"><path d="M0 3 L4 0 L6 2 L2 5Z" fill="#d0a8b8"/></svg>
<div class="t" style="left:230px;top:225px;font-size:9px;color:#a2a2a2;font-weight:bold">Ж</div>
<div class="t" style="left:244px;top:225px;font-size:9px;color:#a2a2a2;font-style:italic;font-weight:bold">К</div>
<div class="t" style="left:258px;top:225px;font-size:9px;color:#a2a2a2;text-decoration:underline">Ч</div>
<div class="t" style="left:272px;top:225px;font-size:9px;color:#a2a2a2;font-weight:bold">S</div>
<div class="t" style="left:283px;top:227px;font-size:6.5px;color:#a8a8a8;text-decoration:line-through">abc</div>
<div class="t" style="left:297px;top:224px;font-size:7.5px;color:#a2a2a2;letter-spacing:-.5px">AV</div><div class="a" style="left:297px;top:233px;width:9px;height:1px;background:#b0b0b0"></div>
<svg style="left:310px;top:229px" width="4" height="3" viewBox="0 0 4 3"><path d="M0 0 H4 L2 3Z" fill="#bbb"/></svg>
<div class="t" style="left:317px;top:226px;font-size:8px;color:#a8a8a8">Aa</div>
<svg style="left:330px;top:229px" width="4" height="3" viewBox="0 0 4 3"><path d="M0 0 H4 L2 3Z" fill="#bbb"/></svg>
<div class="t" style="left:343px;top:224px;font-size:10px;color:#9a9a9a">A</div>
<svg style="left:355px;top:229px" width="4" height="3" viewBox="0 0 4 3"><path d="M0 0 H4 L2 3Z" fill="#bbb"/></svg>
<div class="t gl" style="transform:scaleX(0.9552);transform-origin:0 0;left:278px;top:246px">Шрифт</div>
<svg style="left:355px;top:247px" width="5" height="5" viewBox="0 0 5 5" fill="none" stroke="#aaa" stroke-width=".7"><path d="M.5 .5 H1.5 M.5 .5 V1.5 M2 2 L4.5 4.5 M4.5 2.5 V4.5 H2.5"/></svg>
<!-- paragraph -->
<svg style="left:367px;top:206px" width="90" height="11" viewBox="0 0 90 11" fill="none" stroke="#bcbcbc" stroke-width="1"><path d="M1 2 H2.5 M4.5 2 H11 M1 5.5 H2.5 M4.5 5.5 H11 M1 9 H2.5 M4.5 9 H11"/><path d="M22 2 H23.5 M25.5 2 H32 M22 5.5 H23.5 M25.5 5.5 H32 M22 9 H23.5 M25.5 9 H32"/><path d="M47 2 H57 M51 5.5 H57 M51 9 H57 M47 9 H48 M49.5 4 L47 5.7 L49.5 7.4" /><path d="M61 2 H71 M65 5.5 H71 M65 9 H71 M61 9 H62 M61 4 L63.5 5.7 L61 7.4"/><path d="M81 2 H89 M81 5.5 H89 M81 9 H89 M78 1 V10 M76.5 2.5 L78 1 L79.5 2.5 M76.5 8.5 L78 10 L79.5 8.5"/></svg>
<svg style="left:383px;top:210px" width="4" height="3" viewBox="0 0 4 3"><path d="M0 0 H4 L2 3Z" fill="#c4c4c4"/></svg><svg style="left:404px;top:210px" width="4" height="3" viewBox="0 0 4 3"><path d="M0 0 H4 L2 3Z" fill="#c4c4c4"/></svg><svg style="left:459px;top:210px" width="4" height="3" viewBox="0 0 4 3"><path d="M0 0 H4 L2 3Z" fill="#c4c4c4"/></svg>
<div class="a" style="left:411px;top:204px;width:1px;height:14px;background:#dedede"></div><div class="a" style="left:441px;top:204px;width:1px;height:14px;background:#dedede"></div>
<svg style="left:367px;top:224px" width="80" height="11" viewBox="0 0 80 11" fill="none" stroke="#bcbcbc" stroke-width="1"><path d="M1 2 H10 M1 4.5 H7 M1 7 H10 M1 9.5 H7"/><path d="M15 2 H24 M16.5 4.5 H22.5 M15 7 H24 M16.5 9.5 H22.5"/><path d="M29 2 H38 M32 4.5 H38 M29 7 H38 M32 9.5 H38"/><path d="M43 2 H52 M43 4.5 H52 M43 7 H52 M43 9.5 H52"/><path d="M61 1.5 H71 V10 H61Z M64.3 1.5 V10 M67.6 1.5 V10"/></svg>
<div class="a" style="left:424px;top:222px;width:1px;height:14px;background:#dedede"></div>
<svg style="left:441px;top:229px" width="4" height="3" viewBox="0 0 4 3"><path d="M0 0 H4 L2 3Z" fill="#c4c4c4"/></svg>
<svg style="left:467px;top:199px" width="11" height="11" viewBox="0 0 11 11" fill="none" stroke="#b4b4b4" stroke-width=".9"><path d="M1.5 1 V10 M4.5 1 V10 M7.5 1 V10 M9.5 1 V10 M8.5 2.5 L9.5 1 L10.5 2.5"/></svg>
<div class="t rg" style="transform:scaleX(0.9757);transform-origin:0 0;left:479px;top:201px">Направление текста</div><svg style="left:556px;top:204px" width="4" height="3" viewBox="0 0 4 3"><path d="M0 0 H4 L2 3Z" fill="#c4c4c4"/></svg>
<svg style="left:467px;top:214px" width="11" height="11" viewBox="0 0 11 11" fill="none" stroke="#b4b4b4" stroke-width=".9"><rect x="1" y="1" width="9" height="9" stroke-dasharray="2 1"/><path d="M3 5.5 H8"/></svg>
<div class="t rg" style="transform:scaleX(0.9787);transform-origin:0 0;left:479px;top:216px">Выровнять текст</div><svg style="left:543px;top:219px" width="4" height="3" viewBox="0 0 4 3"><path d="M0 0 H4 L2 3Z" fill="#c4c4c4"/></svg>
<svg style="left:466px;top:229px" width="12" height="11" viewBox="0 0 12 11" fill="none" stroke="#a8a8a8" stroke-width=".9"><path d="M1 2 H7 M3.5 .5 L6 2.5"/><rect x="4.5" y="4" width="7" height="6"/><path d="M1.5 4.5 V8 H4.5"/></svg>
<div class="t rg" style="transform:scaleX(1.0098);transform-origin:0 0;left:479px;top:231px">Преобразовать в SmartArt</div><svg style="left:580px;top:234px" width="4" height="3" viewBox="0 0 4 3"><path d="M0 0 H4 L2 3Z" fill="#c4c4c4"/></svg>
<div class="t gl" style="transform:scaleX(1.0183);transform-origin:0 0;left:461px;top:246px">Абзац</div>
<svg style="left:579px;top:247px" width="5" height="5" viewBox="0 0 5 5" fill="none" stroke="#aaa" stroke-width=".7"><path d="M.5 .5 H1.5 M.5 .5 V1.5 M2 2 L4.5 4.5 M4.5 2.5 V4.5 H2.5"/></svg>
<!-- drawing -->
<div class="a" style="left:591px;top:200px;width:86px;height:39px;background:#fff;border:1px solid #d6d6d6"></div>
<div class="a" style="left:669px;top:201px;width:7px;height:37px;background:#f0f0f0;border-left:1px solid #dcdcdc"></div>
<div class="a" style="left:669px;top:201px;width:7px;height:12px;background:#dcdcdc"></div>
<svg style="left:593px;top:202px" width="76" height="36" viewBox="0 0 76 36" fill="none" stroke="#555" stroke-width=".8"><rect x=".8" y="1.5" width="8" height="6" fill="#ddd"/><path d="M2 3 H7.5 M2 5 H6" stroke="#888" stroke-width=".6"/><path d="M12 1.5 L19 8"/><path d="M24 1.5 L31 8 M31 8 L29 7.6 M31 8 L30.6 6"/><rect x="34.5" y="2" width="8" height="6"/><ellipse cx="51" cy="5" rx="4.5" ry="3"/><rect x="58.5" y="2" width="8" height="6" rx="1.8"/><path d="M1 20 L5 13 L9 20Z"/><path d="M12 13.5 H15 V19.5 H19"/><path d="M23 13.5 H26 V19.5 H30 M30 19.5 L28.6 18.6 M30 19.5 L28.6 20.4"/><path d="M34 15.5 H38.5 V13.5 L42.5 16.5 L38.5 19.5 V17.5 H34Z"/><path d="M49 13 H53 V16.5 H55 L51 20.5 L47 16.5 H49Z"/><path d="M58.5 14 H64 C66 14 67 15 67 17 H65 V20 H58.5Z"/><path d="M3 25.5 C6 24 7 26 5 28 C3 30 4 32 7 31 M4 27 L6.5 32"/><path d="M12 26 C16 26 18 28 19 32"/><path d="M23 32 C25 24 27 24 28 28 C29 32 30 32 31 30"/><path d="M39.5 25.5 C38 25.5 38.5 28 37.5 29 C38.5 30 38 32.5 39.5 32.5"/><path d="M49.5 25.5 C51 25.5 50.5 28 51.5 29 C50.5 30 51 32.5 49.5 32.5"/><path d="M63 25 L64.2 27.8 L67 28 L64.8 29.8 L65.6 32.6 L63 31 L60.4 32.6 L61.2 29.8 L59 28 L61.8 27.8Z"/></svg>
<svg style="left:671px;top:218px" width="4" height="3" viewBox="0 0 4 3"><path d="M0 3 H4 L2 0Z" fill="#777" transform="rotate(180 2 1.5)"/></svg>
<svg style="left:671px;top:229px" width="4" height="5" viewBox="0 0 4 5"><path d="M0 0 H4 M0 2 H4 L2 5Z" fill="#777" stroke="#777" stroke-width=".6"/></svg>
<svg style="left:695px;top:199px" width="19" height="19" viewBox="0 0 19 19"><rect x=".8" y=".8" width="8" height="8" fill="#fff" stroke="#9a9a9a" stroke-width=".8"/><rect x="4.5" y="4.5" width="9" height="9" fill="#eec868"/><rect x="10" y="10" width="8" height="8" fill="#fff" stroke="#9a9a9a" stroke-width=".8"/></svg>
<div class="t rb" style="transform:scaleX(0.9228);transform-origin:0 0;left:680px;top:223px;font-weight:bold;color:#555">Упорядочить</div>
<svg style="left:702px;top:236px" width="4" height="3" viewBox="0 0 4 3"><path d="M0 0 H4 L2 3Z" fill="#666"/></svg>
<svg style="left:741px;top:199px" width="20" height="19" viewBox="0 0 20 19"><rect x="1" y="1" width="15" height="14" rx="2" fill="#f8f8f8" stroke="#d2d2d2" stroke-width=".8"/><path d="M18.5 3 C15 8 13 11 10 14 L8.5 16.5 L11.5 15.5 C14 12 16.5 8 18.5 3Z" fill="#c8c8c8"/></svg>
<div class="t rg" style="transform:scaleX(0.9400);transform-origin:0 0;left:732px;top:223px">Экспресс-</div>
<div class="t rg" style="transform:scaleX(0.9398);transform-origin:0 0;left:737px;top:234px">стили</div><svg style="left:760px;top:237px" width="4" height="3" viewBox="0 0 4 3"><path d="M0 0 H4 L2 3Z" fill="#c4c4c4"/></svg>
<svg style="left:772px;top:198px" width="10" height="10" viewBox="0 0 10 10" fill="none" stroke="#b4b4b4" stroke-width=".9"><path d="M2 5 L5.5 1.5 L9 5 L5.5 8.5Z M1 6 C.5 7 .5 8 1.2 8 C1.9 8 1.9 7 1 6Z M4.5 .5 L6 2"/></svg>
<div class="t rg" style="transform:scaleX(0.9821);transform-origin:0 0;left:783px;top:200px">Заливка фигуры</div><svg style="left:846px;top:203px" width="4" height="3" viewBox="0 0 4 3"><path d="M0 0 H4 L2 3Z" fill="#c4c4c4"/></svg>
<svg style="left:771px;top:213px" width="11" height="9" viewBox="0 0 11 9" fill="none" stroke="#b4b4b4" stroke-width=".9"><rect x=".5" y="1.5" width="7" height="6"/><path d="M10.5 .5 L5.5 6 L4.5 7.5 L6.2 7 Z" fill="#c4c4c4"/></svg>
<div class="t rg" style="transform:scaleX(1.0008);transform-origin:0 0;left:783px;top:215px">Контур фигуры</div><svg style="left:842px;top:218px" width="4" height="3" viewBox="0 0 4 3"><path d="M0 0 H4 L2 3Z" fill="#c4c4c4"/></svg>
<svg style="left:771px;top:228px" width="11" height="9" viewBox="0 0 11 9"><ellipse cx="5" cy="5" rx="4.5" ry="3.3" fill="#cfcfcf"/><ellipse cx="6" cy="4" rx="4.5" ry="3.3" fill="#f6f6f6" stroke="#b4b4b4" stroke-width=".8"/></svg>
<div class="t rg" style="transform:scaleX(0.9299);transform-origin:0 0;left:783px;top:229px">Эффекты фигуры</div><svg style="left:848px;top:232px" width="4" height="3" viewBox="0 0 4 3"><path d="M0 0 H4 L2 3Z" fill="#c4c4c4"/></svg>
<div class="t gl" style="transform:scaleX(0.9358);transform-origin:0 0;left:700px;top:246px">Рисование</div>
<svg style="left:849px;top:247px" width="5" height="5" viewBox="0 0 5 5" fill="none" stroke="#aaa" stroke-width=".7"><path d="M.5 .5 H1.5 M.5 .5 V1.5 M2 2 L4.5 4.5 M4.5 2.5 V4.5 H2.5"/></svg>
<!-- editing -->
<svg style="left:861px;top:199px" width="9" height="10" viewBox="0 0 9 10" fill="none" stroke="#2b6cb8" stroke-width="1.1"><circle cx="5.3" cy="3.7" r="3"/><path d="M3.2 6 L.6 9.4"/></svg>
<div class="t rb" style="transform:scaleX(0.9637);transform-origin:0 0;left:873px;top:200px;color:#333">Найти</div>
<svg style="left:861px;top:213px" width="10" height="10" viewBox="0 0 10 10" fill="none" stroke="#2b6cb8" stroke-width=".9"><path d="M1 4.5 H8 M6.5 3 L8 4.5 L6.5 6"/><text x="0" y="3.5" font-size="4" fill="#555" stroke="none" font-family="Liberation Sans,sans-serif">ab</text><text x="1" y="10" font-size="4" fill="#555" stroke="none" font-family="Liberation Sans,sans-serif">ac</text></svg>
<div class="t rb" style="transform:scaleX(1.0013);transform-origin:0 0;left:873px;top:215px;color:#333">Заменить</div><svg style="left:914px;top:218px" width="4" height="3" viewBox="0 0 4 3"><path d="M0 0 H4 L2 3Z" fill="#666"/></svg>
<svg style="left:862px;top:227px" width="8" height="10" viewBox="0 0 8 10" fill="#fff" stroke="#666" stroke-width=".8"><path d="M1 .8 V8 L3 6.2 L4.5 9.4 L5.8 8.8 L4.4 5.8 H7Z"/></svg>
<div class="t rb" style="transform:scaleX(0.9483);transform-origin:0 0;left:873px;top:229px;color:#333">Выделить</div><svg style="left:911px;top:232px" width="4" height="3" viewBox="0 0 4 3"><path d="M0 0 H4 L2 3Z" fill="#666"/></svg>
<div class="t gl" style="transform:scaleX(0.9751);transform-origin:0 0;left:863px;top:246px">Редактирование</div>
<!-- wps pdf -->
<svg style="left:928px;top:199px" width="20" height="19" viewBox="0 0 20 19" fill="none"><path d="M3 .8 H11 L15 4.5 V17 H3Z" fill="#fff" stroke="#888" stroke-width=".8"/><rect x="0" y="3" width="9" height="5" fill="#e0433a"/><text x=".8" y="7" font-size="3.8" fill="#fff" font-weight="bold" font-family="Liberation Sans,sans-serif">PDF</text><circle cx="15" cy="14" r="4" fill="#fff" stroke="#666" stroke-width=".8"/><path d="M15 12 V16 M13 14 H17" stroke="#666" stroke-width=".8"/></svg>
<div class="t rb" style="transform:scaleX(0.9993);transform-origin:0 0;left:926px;top:223px">Create</div>
<div class="t rb" style="transform:scaleX(0.8750);transform-origin:0 0;left:931px;top:234px">PDF</div>
<svg style="left:955px;top:199px" width="20" height="19" viewBox="0 0 20 19" fill="none" stroke="#666" stroke-width=".9"><path d="M10 2.5 L15.5 8 L6 16.5 L1.5 17 L2.5 12Z M13 0.8 L18 5.8 L15.5 8 M6 12 L1.5 17"/><circle cx="7" cy="11" r="1" stroke="#d04040"/></svg>
<div class="t rb" style="transform:scaleX(0.9990);transform-origin:0 0;left:956px;top:223px">Sign</div>
<div class="t gl" style="transform:scaleX(0.8780);transform-origin:0 0;left:937px;top:246px">WPS PDF</div>
<svg style="left:1011px;top:247px" width="7" height="4" viewBox="0 0 7 4"><path d="M.5 3.5 L3.5 .7 L6.5 3.5" fill="none" stroke="#555" stroke-width="1"/></svg>
<!-- ===== video column ===== -->
<svg width="0" height="0" style="left:0;top:0"><defs><filter id="b1" x="-10%" y="-10%" width="120%" height="120%"><feGaussianBlur stdDeviation="1.1"/></filter><filter id="b2" x="-20%" y="-20%" width="140%" height="140%"><feGaussianBlur stdDeviation="2.2"/></filter><filter id="b0" x="-10%" y="-10%" width="120%" height="120%"><feGaussianBlur stdDeviation=".6"/></filter></defs></svg>
<!-- tile 1 active speaker -->
<svg style="left:1096px;top:93px;border-radius:7px;overflow:hidden" width="136" height="77" viewBox="0 0 136 77"><rect width="136" height="77" fill="#bcb8ad"/><g filter="url(#b2)"><rect x="-5" y="-5" width="50" height="90" fill="#b3afa6"/><rect x="7" y="19" width="30" height="36" fill="#858d9a"/><rect x="20" y="26" width="9" height="24" fill="#a9b4c4"/><rect x="126" y="10" width="14" height="70" fill="#5d544e"/><rect x="40" y="0" width="86" height="40" fill="#c6c2b6"/></g><g filter="url(#b1)"><path d="M32 80 C34 56 47 48 62 46 H76 C93 48 106 56 110 80Z" fill="#45454d"/><path d="M44 70 l3 -6 M56 60 l4 3 M84 58 l4 4 M94 68 l3 -4 M66 66 l3 3 M50 76 l3 -3 M88 74 l4 -2" stroke="#9a9aa4" stroke-width="2"/><path d="M51 30 C51 14 58 9 68 9 C79 9 86 15 86 30 C86 40 84 48 80 51 H56 C52 47 51 40 51 30Z" fill="#d6a35c"/><path d="M57 30 C57 21 61 17 68 17 C75 17 79 21 79 31 C79 41 75 48 68 48 C61 48 57 41 57 30Z" fill="#e2b39c"/><rect x="61" y="44" width="14" height="9" fill="#dba992"/><path d="M56 22 C60 14 76 14 80 22 C76 19 62 19 56 22Z" fill="#d6a35c"/><rect x="62" y="26" width="4" height="1.5" fill="#8a6a5a"/><rect x="71" y="26" width="4" height="1.5" fill="#8a6a5a"/><rect x="65" y="38" width="7" height="1.6" fill="#b8726a"/></g></svg>
<div class="a" style="left:1096px;top:93px;width:136px;height:77px;border:2.5px solid #2bd98c;border-radius:7px"></div>
<div class="vl" style="top:151.5px;left:1099.5px;width:115.5px;height:16px;background:rgba(38,38,38,.78)"></div>
<div class="vt" style="transform:scaleX(0.9881);transform-origin:0 0;left:1102.8px;top:153.5px;color:#f0e8e4">Олександра Мармаза</div>
<!-- tile 2 -->
<svg style="left:1096.5px;top:170px;overflow:hidden" width="133.3" height="73.5" viewBox="0 0 134 73.5" preserveAspectRatio="none"><rect width="134" height="74" fill="#e9eef2"/><g filter="url(#b1)"><rect x="26" y="0" width="98" height="62" fill="#f1f4f6"/><rect x="56" y="0" width="68" height="50" fill="#d3d9dc"/><path d="M60 0 V20 M68 0 V26 M90 0 V44 M98 0 V50 M106 4 V52 M114 0 V54 M120 0 V40 M84 6 V36 M76 0 V18" stroke="#aab3b7" stroke-width="2.4"/><path d="M64 0 V24 M94 0 V48 M102 0 V40 M110 0 V50 M87 0 V30 M118 10 V56 M72 0 V14" stroke="#f4f7f9" stroke-width="2"/><path d="M30 0 V34 M38 6 V30 M44 0 V24" stroke="#c3cbcf" stroke-width="1.8"/><path d="M93 6 V40 M105 0 V46 M116 6 V44 M62 0 V12" stroke="#7f8a8e" stroke-width="1"/></g><g filter="url(#b1)"><rect x="0" y="0" width="21" height="74" fill="#d6cfba"/><rect x="2" y="0" width="3" height="74" fill="#8d8468"/><rect x="20" y="0" width="6" height="74" fill="#f4f4f2"/><rect x="49" y="0" width="7" height="30" fill="#f6f6f4"/><rect x="124" y="0" width="10" height="74" fill="#dcd6c6"/><path d="M100 74 C102 60 110 52 124 50 V74Z" fill="#f4f6f8"/><path d="M17 74 V42 C17 35 21 33 27 33 H42 C47 33 48 37 48 42 V74Z" fill="#17171a"/><path d="M5 74 V52 C8 48 13 48 16 52 V74Z" fill="#3a3034"/><rect x="8" y="56" width="6" height="12" fill="#7a5a78"/><path d="M40 74 C42 58 50 50 62 48 H84 C96 52 104 62 108 74Z" fill="#1b1b1f"/><path d="M50 26 C50 44 54 56 66 56 C78 56 84 46 84 26Z" fill="#c39072"/><path d="M47 36 C46 20 54 13 66 13 C78 13 86 20 85 36 C80 30 76 33 66 33 C56 33 52 30 50 40Z" fill="#877a62"/><path d="M54 40 h10 M70 40 h10" stroke="#6a4a3c" stroke-width="1.6"/><path d="M124 74 V48 H133 V74Z" fill="#202024"/></g></svg>
<div class="vl" style="top:226.5px;left:1099.5px;width:66.5px;height:16px;background:rgba(34,34,36,.82)"></div><svg style="left:1101px;top:228px" width="12" height="13" viewBox="0 0 12 13"><rect x="3.6" y="1" width="4" height="6.5" rx="2" fill="#e4464e"/><path d="M1.8 6 C1.8 8.6 3.4 9.8 5.6 9.8 C7.8 9.8 9.4 8.6 9.4 6 M5.6 9.8 V12 M3.6 12 H7.6" fill="none" stroke="#e4464e" stroke-width="1.1"/><path d="M.6 11.6 L10.8 .6" stroke="#e4464e" stroke-width="1.6"/></svg>
<div class="vt" style="transform:scaleX(0.9076);transform-origin:0 0;left:1117px;top:228px">InterSSPU</div>
<!-- tile 3 small image -->
<svg style="left:1134px;top:252px;border-radius:5px;overflow:hidden" width="60" height="50" viewBox="0 0 60 50"><rect width="60" height="50" fill="#e4dccb"/><g filter="url(#b0)"><path d="M3 0 V26 M9 0 V26 M15 0 V26 M21 0 V26 M27 0 V24 M33 0 V14 M39 0 V14 M45 0 V14 M51 0 V26 M57 0 V30" stroke="#cfc7b6" stroke-width="2"/><rect x="0" y="0" width="60" height="3" fill="#f2ede2"/><path d="M35 15 H46 C49 15 50 17 50 20 V44 H35Z" fill="#1a1a1e"/><path d="M0 33 L20 29 L60 46 V50 H0Z" fill="#c0703e"/><path d="M0 40 L14 37 L34 50 H0Z" fill="#8a7868"/><path d="M4 21 L13 18 L15 28 L6 31Z" fill="#4a5058"/><path d="M21 24 C21 21 24 20 29 20 C34 20 37 21 37 25 V38 L22 36Z" fill="#24252c"/><ellipse cx="29" cy="15" rx="5.5" ry="7" fill="#3b2a22"/><ellipse cx="29" cy="15.5" rx="3.3" ry="4.5" fill="#d8a78a"/><path d="M21 30 L18 38 L28 39 L36 36" stroke="#d8a78a" stroke-width="2.5" fill="none"/><rect x="3" y="38" width="9" height="12" fill="#dfe6f2"/></g></svg>
<div class="vl" style="top:302px;left:1099.5px;width:112px;height:15px"></div><svg style="left:1101px;top:303px" width="12" height="13" viewBox="0 0 12 13"><rect x="3.6" y="1" width="4" height="6.5" rx="2" fill="#e4464e"/><path d="M1.8 6 C1.8 8.6 3.4 9.8 5.6 9.8 C7.8 9.8 9.4 8.6 9.4 6 M5.6 9.8 V12 M3.6 12 H7.6" fill="none" stroke="#e4464e" stroke-width="1.1"/><path d="M.6 11.6 L10.8 .6" stroke="#e4464e" stroke-width="1.6"/></svg>
<div class="vt" style="transform:scaleX(0.9834);transform-origin:0 0;left:1116.7px;top:303px">Анджела Остапчук</div>
<!-- Roman -->
<div class="t" style="transform:scaleX(0.9846);transform-origin:0 0;left:1128px;top:349.5px;font-size:12.5px;font-weight:bold;color:#fff">Роман Брик</div>
<div class="vl" style="top:376.5px;left:1099.5px;width:78.5px"></div><svg style="left:1101px;top:377.5px" width="12" height="13" viewBox="0 0 12 13"><rect x="3.6" y="1" width="4" height="6.5" rx="2" fill="#e4464e"/><path d="M1.8 6 C1.8 8.6 3.4 9.8 5.6 9.8 C7.8 9.8 9.4 8.6 9.4 6 M5.6 9.8 V12 M3.6 12 H7.6" fill="none" stroke="#e4464e" stroke-width="1.1"/><path d="M.6 11.6 L10.8 .6" stroke="#e4464e" stroke-width="1.6"/></svg>
<div class="vt" style="transform:scaleX(0.9937);transform-origin:0 0;left:1116.7px;top:377.5px">Роман Брик</div>
<!-- tile Vasynova -->
<svg style="left:1096.5px;top:394px;overflow:hidden" width="133.3" height="74.5" viewBox="0 0 134 74.5" preserveAspectRatio="none"><defs><linearGradient id="vg" x1="0" x2="1"><stop offset="0" stop-color="#275fd0"/><stop offset="1" stop-color="#336bda"/></linearGradient></defs><rect width="134" height="75" fill="url(#vg)"/><g filter="url(#b0)"><rect x="7" y="5" width="15" height="13.5" rx="2" fill="#f2ecc8"/><circle cx="14.5" cy="11.7" r="4.2" fill="#e8cf6a"/><circle cx="14.5" cy="11.7" r="2" fill="#3a4a8a"/><path d="M24 8.5 H44 M24 11 H50 M24 13.5 H42 M24 16 H48" stroke="#b8c8ee" stroke-width="1.3"/></g><g filter="url(#b1)"><path d="M30 75 C34 58 46 52 58 49 H92 C108 52 122 60 128 75Z" fill="#4a4236"/><path d="M40 66 l4 -4 M52 58 l4 3 M100 60 l5 3 M112 68 l4 -3 M46 72 l4 -2 M106 72 l4 2 M118 72 l3 -3" stroke="#8a7a58" stroke-width="2"/><path d="M49 60 C51 40 50 20 56 6 C60 -2 84 -2 90 6 C96 20 94 42 96 60 C90 62 56 62 49 60Z" fill="#cdae7a"/><path d="M58 30 C58 18 64 11 74 11 C84 11 89 18 89 30 C89 44 82 54 74 54 C65 54 58 44 58 30Z" fill="#dbab90"/><path d="M57 26 C58 10 70 6 78 8 C70 12 62 18 60 34Z" fill="#cdae7a"/><rect x="66" y="50" width="15" height="10" fill="#d3a188"/><path d="M63 29 h8 M78 29 h8" stroke="#7a5a48" stroke-width="1.6"/><rect x="70" y="43" width="9" height="1.8" fill="#b87068"/></g></svg>
<div class="vl" style="top:452px;left:1099.5px;width:112.5px;height:16px;background:rgba(36,40,52,.82)"></div><svg style="left:1101px;top:453.5px" width="12" height="13" viewBox="0 0 12 13"><rect x="3.6" y="1" width="4" height="6.5" rx="2" fill="#e4464e"/><path d="M1.8 6 C1.8 8.6 3.4 9.8 5.6 9.8 C7.8 9.8 9.4 8.6 9.4 6 M5.6 9.8 V12 M3.6 12 H7.6" fill="none" stroke="#e4464e" stroke-width="1.1"/><path d="M.6 11.6 L10.8 .6" stroke="#e4464e" stroke-width="1.6"/></svg>
<div class="vt" style="transform:scaleX(0.9375);transform-origin:0 0;left:1117px;top:453.5px">Надія ВАСИНЬОВА</div>
<!-- tile Kraeva -->
<svg style="left:1096.5px;top:468.5px;overflow:hidden" width="133.3" height="75" viewBox="0 0 134 75" preserveAspectRatio="none"><rect width="134" height="75" fill="#d3cdd1"/><g filter="url(#b1)"><rect x="0" y="0" width="26" height="75" fill="#7e4c3c"/><path d="M22 0 H44 L47 10 V75 H22Z" fill="#5e433b"/><rect x="34" y="8" width="2" height="67" fill="#4a342e"/><rect x="47" y="0" width="87" height="75" fill="#d3cdd1"/><path d="M60 10 l3 3 M100 14 l3 3 M112 34 l3 3 M118 8 l3 2 M108 56 l3 3" stroke="#c2b8c0" stroke-width="2"/><path d="M84 75 C88 68 100 64 112 75Z" fill="#4a4a50"/><path d="M50 75 C50 50 52 28 62 20 C70 14 86 14 92 22 C102 34 100 56 104 75Z" fill="#d5bc8e"/><path d="M59 46 C59 34 66 28 77 28 C88 28 95 34 95 46 C95 60 88 70 77 70 C66 70 59 60 59 46Z" fill="#deb6a0"/><path d="M60 40 C62 26 76 22 90 28 C80 28 68 32 64 44Z" fill="#d5bc8e"/><rect x="58" y="43.5" width="17" height="11" rx="4" fill="#e6c8ba" stroke="#2e2428" stroke-width="1.8"/><rect x="79" y="43.5" width="17" height="11" rx="4" fill="#e6c8ba" stroke="#2e2428" stroke-width="1.8"/><path d="M75 47 h4" stroke="#2e2428" stroke-width="1.5"/><path d="M62 49 h9 M83 49 h9" stroke="#6a5048" stroke-width="1.4"/></g></svg>
<div class="vl" style="top:526.5px;left:1099.5px;width:86.5px;height:15.5px"></div><svg style="left:1101px;top:528px" width="12" height="13" viewBox="0 0 12 13"><rect x="3.6" y="1" width="4" height="6.5" rx="2" fill="#e4464e"/><path d="M1.8 6 C1.8 8.6 3.4 9.8 5.6 9.8 C7.8 9.8 9.4 8.6 9.4 6 M5.6 9.8 V12 M3.6 12 H7.6" fill="none" stroke="#e4464e" stroke-width="1.1"/><path d="M.6 11.6 L10.8 .6" stroke="#e4464e" stroke-width="1.6"/></svg>
<div class="vt" style="transform:scaleX(1.0033);transform-origin:0 0;left:1116.7px;top:528px">Надія Краєва</div>
<!-- tile Makarenko -->
<svg style="left:1096.5px;top:543.5px;overflow:hidden" width="133.3" height="74.5" viewBox="0 0 134 74.5" preserveAspectRatio="none"><rect width="134" height="75" fill="#d2ddd0"/><g filter="url(#b2)"><rect x="-6" y="53" width="60" height="30" fill="#ab8f72"/><rect x="92" y="53" width="50" height="30" fill="#ab8f72"/><rect x="98" y="-4" width="42" height="27" fill="#e8dadc"/><rect x="100" y="3" width="14" height="16" fill="#bf2f48"/><rect x="121" y="6" width="13" height="15" fill="#cc4058"/></g><g filter="url(#b1)"><path d="M46 75 C44 50 50 30 72 29 C94 30 100 50 98 75Z" fill="#4b3e36"/><path d="M55 75 C53 56 60 45 72 45 C84 45 92 56 90 75Z" fill="#b38a74"/><path d="M54 54 C58 40 86 40 91 54 C84 46 62 46 54 54Z" fill="#4b3e36"/><path d="M56 56 h14 M76 56 h14" stroke="#3a2c30" stroke-width="2.2"/></g></svg>
<div class="vl" style="top:601px;left:1099.5px;width:129.5px;height:15.5px"></div><svg style="left:1101px;top:602.5px" width="12" height="13" viewBox="0 0 12 13"><rect x="3.6" y="1" width="4" height="6.5" rx="2" fill="#e4464e"/><path d="M1.8 6 C1.8 8.6 3.4 9.8 5.6 9.8 C7.8 9.8 9.4 8.6 9.4 6 M5.6 9.8 V12 M3.6 12 H7.6" fill="none" stroke="#e4464e" stroke-width="1.1"/><path d="M.6 11.6 L10.8 .6" stroke="#e4464e" stroke-width="1.6"/></svg>
<div class="vt" style="transform:scaleX(0.9849);transform-origin:0 0;left:1116.7px;top:602.5px">Олена Макаренко Х...</div>
<!-- Natalia -->
<div class="a" style="left:1133.5px;top:627px;width:60px;height:50px;border-radius:5px;background:#b146c2"></div>
<div class="t" style="transform:scaleX(0.8871);transform-origin:0 0;left:1153.2px;top:640.8px;font-size:32px;color:#fff;font-weight:normal">Н</div>
<div class="vl" style="top:676.5px;width:117px"></div><svg style="left:1101px;top:677.5px" width="12" height="13" viewBox="0 0 12 13"><rect x="3.6" y="1" width="4" height="6.5" rx="2" fill="#e4464e"/><path d="M1.8 6 C1.8 8.6 3.4 9.8 5.6 9.8 C7.8 9.8 9.4 8.6 9.4 6 M5.6 9.8 V12 M3.6 12 H7.6" fill="none" stroke="#e4464e" stroke-width="1.1"/><path d="M.6 11.6 L10.8 .6" stroke="#e4464e" stroke-width="1.6"/></svg>
<div class="vt" style="transform:scaleX(1.0013);transform-origin:0 0;left:1116.5px;top:677.5px">Наталія Одинокова</div>
<!-- Olena D -->
<div class="t" style="transform:scaleX(0.9906);transform-origin:0 0;left:1111px;top:724.5px;font-size:12.5px;font-weight:bold;color:#fff">Олена Душаткіна</div>
<div class="vl" style="top:751px;width:107px"></div><svg style="left:1101px;top:752px" width="12" height="13" viewBox="0 0 12 13"><rect x="3.6" y="1" width="4" height="6.5" rx="2" fill="#e4464e"/><path d="M1.8 6 C1.8 8.6 3.4 9.8 5.6 9.8 C7.8 9.8 9.4 8.6 9.4 6 M5.6 9.8 V12 M3.6 12 H7.6" fill="none" stroke="#e4464e" stroke-width="1.1"/><path d="M.6 11.6 L10.8 .6" stroke="#e4464e" stroke-width="1.6"/></svg>
<div class="vt" style="transform:scaleX(1.0004);transform-origin:0 0;left:1116.5px;top:752px">Олена Душаткіна</div>
<div class="a" style="left:1134px;top:769px;width:59.5px;height:26.5px;border-radius:4px;background:#1b1c1f"></div>
<svg style="left:1157px;top:779px" width="12" height="8" viewBox="0 0 12 8"><path d="M1 1.5 L6 6.5 L11 1.5" fill="none" stroke="#c8c8c8" stroke-width="1.5"/></svg>
<!-- ===== chat panel ===== -->
<div class="a" style="left:1299px;top:40px;width:298px;height:822px;background:#1c1d20;border-radius:8px;box-shadow:0 0 0 1px #24262a"></div>
<div class="a" style="left:1304px;top:81px;width:288px;height:777px;background:#111417;border-radius:0 0 5px 5px"></div>
<div class="t" style="transform:scaleX(0.9936);transform-origin:0 0;left:1311.5px;top:57.35px;font-size:10.8px;font-weight:bold;color:#f2f2f2">Зал персональной конференции Оле...</div>
<svg style="left:1529px;top:61px" width="10" height="2" viewBox="0 0 10 2" fill="#9a9a9a"><circle cx="1" cy="1" r="1"/><circle cx="5" cy="1" r="1"/><circle cx="9" cy="1" r="1"/></svg>
<svg style="left:1550px;top:56.5px" width="12" height="12" viewBox="0 0 12 12" fill="none" stroke="#c4c4c4" stroke-width="1.3"><path d="M5.5 1.2 H3 C1.8 1.2 1 2 1 3.2 V9 C1 10.2 1.8 11 3 11 H8.8 C10 11 10.8 10.2 10.8 9 V6.5 M7.5 .8 H11.2 V4.5 M11 1 L5.5 6.5"/></svg>
<svg style="left:1573px;top:58px" width="9" height="9" viewBox="0 0 9 9"><path d="M.6 .6 L8.4 8.4 M8.4 .6 L.6 8.4" stroke="#c4c4c4" stroke-width="1.2"/></svg>
<div class="cbub" style="top:78px;width:33.5px;height:6px;border-radius:0 0 10px 10px;background:#2e2e31"></div>
<div class="a" style="left:1304px;top:76px;width:288px;height:5px;background:#1c1d20"></div>

<div class="cn" style="transform:scaleX(1.0247);transform-origin:0 0;top:94.2px">Тетяна Кузьменко</div>
<div class="ct" style="transform:scaleX(0.9542);transform-origin:0 0;left:1438.2px;top:93.5px">15:14</div>
<div class="cav" style="top:108.9px;background:#a24fc4;font-size:12px">Т</div>
<div class="cn" style="transform:scaleX(1.0147);transform-origin:0 0;top:148.2px">Katerina Surova</div>
<div class="ct" style="transform:scaleX(0.9542);transform-origin:0 0;left:1425px;top:147.5px">15:14</div>
<div class="cav" style="top:162.9px"><div style="left:0;top:0;width:20px;height:20px;background:#b9b2a6"></div><div style="left:4px;top:2px;width:12px;height:15px;border-radius:6px;background:#a87848"></div><div style="left:6px;top:5px;width:8px;height:10px;border-radius:4px;background:#e6bfa6"></div><div style="left:3px;top:16px;width:14px;height:6px;border-radius:6px 6px 0 0;background:#efefef"></div></div>
<div class="cn" style="transform:scaleX(0.9661);transform-origin:0 0;top:202.2px">Надія ВАСИНЬОВА</div>
<div class="ct" style="transform:scaleX(0.9542);transform-origin:0 0;left:1440.5px;top:201.5px">15:14</div>
<div class="cav" style="top:216.9px;background:#2e86d6;font-size:12px">Н</div>
<div class="cn" style="transform:scaleX(1.0318);transform-origin:0 0;top:256.2px">Ольга Лисенко</div>
<div class="ct" style="transform:scaleX(0.9542);transform-origin:0 0;left:1423.1px;top:255.5px">15:14</div>
<div class="cav" style="top:270.9px"><div style="left:0;top:0;width:20px;height:20px;background:#2a2224"></div><div style="left:4px;top:1px;width:12px;height:17px;border-radius:6px;background:#5a3428"></div><div style="left:6px;top:4px;width:8px;height:10px;border-radius:4px;background:#e2b39c"></div><div style="left:3px;top:15px;width:14px;height:6px;border-radius:6px 6px 0 0;background:#e6e2e2"></div></div>
<div class="cn" style="transform:scaleX(1.0064);transform-origin:0 0;top:310.2px">HONOR 90 Lite</div>
<div class="ct" style="transform:scaleX(0.9542);transform-origin:0 0;left:1422.6px;top:309.5px">15:14</div>
<div class="cav" style="top:324.9px;background:#f2a01e;font-size:10.5px">H9</div>
<div class="cn" style="transform:scaleX(1.0221);transform-origin:0 0;top:364.2px">Наталія Котляр</div>
<div class="ct" style="transform:scaleX(0.9542);transform-origin:0 0;left:1425px;top:363.5px">15:14</div>
<div class="cav" style="top:378.9px;background:#a24fc4;font-size:12px">Н</div>
<div class="cn" style="transform:scaleX(1.0034);transform-origin:0 0;top:418.2px">Тетяна Медвєдєва</div>
<div class="ct" style="transform:scaleX(0.9542);transform-origin:0 0;left:1439.6px;top:417.5px">15:14</div>
<div class="cav" style="top:432.9px;background:#6d4c41;font-size:12px">Т</div>
<div class="cn" style="transform:scaleX(1.0075);transform-origin:0 0;top:472.2px">Балаклійський ЦДЮТ</div>
<div class="ct" style="transform:scaleX(0.9542);transform-origin:0 0;left:1454.4px;top:471.5px">15:14</div>
<div class="cav" style="top:486.9px;background:#2e86d6;font-size:12px">Б</div>
<div class="cn" style="transform:scaleX(1.0158);transform-origin:0 0;top:526.2px">Zoya Kupina</div>
<div class="ct" style="transform:scaleX(0.9542);transform-origin:0 0;left:1408.5px;top:525.5px">15:15</div>
<div class="cav" style="top:540.9px"><div style="left:0;top:0;width:20px;height:20px;background:#8a8f7a"></div><div style="left:4px;top:1px;width:12px;height:13px;border-radius:6px;background:#d8b070"></div><div style="left:6px;top:4px;width:8px;height:9px;border-radius:4px;background:#e6b8a0"></div><div style="left:2px;top:13px;width:16px;height:8px;border-radius:7px 7px 0 0;background:#d8434a"></div></div>
<div class="cn" style="transform:scaleX(1.0224);transform-origin:0 0;top:581.8px">Тетяна Кузьменко</div>
<div class="ct" style="transform:scaleX(0.9542);transform-origin:0 0;left:1438px;top:581.1px">15:19</div>
<div class="cav" style="top:595.6px;background:#a24fc4;font-size:12px">Т</div>
<div class="cn" style="transform:scaleX(0.9934);transform-origin:0 0;top:652.6px">Олена Вельцен</div>
<div class="ct" style="transform:scaleX(0.9542);transform-origin:0 0;left:1424.3px;top:651.9px">15:24</div>
<div class="cav" style="top:666.1px;background:#1fa98a;font-size:12px">О</div>
<div class="cbub" style="top:107.5px;width:33.7px;height:31px"></div>
<div class="cm" style="left:1347.5px;top:115px">1</div>
<div class="cbub" style="top:161.5px;width:33.7px;height:31px"></div>
<div class="cm" style="left:1347.5px;top:169px">1</div>
<div class="cbub" style="top:215.5px;width:33.7px;height:31px"></div>
<div class="cm" style="left:1347.5px;top:223px">1</div>
<div class="cbub" style="top:269.5px;width:33.7px;height:31px"></div>
<div class="cm" style="left:1347.5px;top:277px">1</div>
<div class="cbub" style="top:323.5px;width:33.7px;height:31px"></div>
<div class="cm" style="left:1347.5px;top:331px">1</div>
<div class="cbub" style="top:377.5px;width:33.7px;height:31px"></div>
<div class="cm" style="left:1347.5px;top:385px">1</div>
<div class="cbub" style="top:431.5px;width:33.7px;height:31px"></div>
<div class="cm" style="left:1347.5px;top:439px">1</div>
<div class="cbub" style="top:485.5px;width:33.7px;height:31px"></div>
<div class="cm" style="left:1347.5px;top:493px">1</div>
<div class="cbub" style="top:539.5px;width:33.7px;height:31px"></div>
<div class="cm" style="left:1347.5px;top:547px">1</div>
<div class="cbub" style="top:594.2px;width:204px;height:48px"></div>
<div class="cm" style="transform:scaleX(1.0116);transform-origin:0 0;left:1347.3px;top:602px">Кузьменко&nbsp; Тетяна Миколаївна</div>
<div class="cm" style="transform:scaleX(0.9664);transform-origin:0 0;left:1347.3px;top:618.5px">ЗДО 124, м. Харків</div>
<div class="cbub" style="top:665px;width:110.4px;height:48px"></div>
<div class="cm" style="transform:scaleX(1.0224);transform-origin:0 0;left:1347.3px;top:672.8px">Добрий день!</div>
<div class="cm" style="transform:scaleX(0.9811);transform-origin:0 0;left:1347.3px;top:689.3px">Олена Вельцен</div>
<svg style="left:1345px;top:719px" width="14" height="13" viewBox="0 0 14 13" fill="none" stroke="#8d8f93" stroke-width="1.2"><path d="M7.5 2 H3.5 C2 2 1 3 1 4.5 V7.5 C1 9 2 10 3.5 10 V12.2 L6 10 H8.5 C10 10 11 9 11 7.5 V6 M11 .5 V4.5 M9 2.5 H13"/></svg>
<svg style="left:1365px;top:719px" width="14" height="13" viewBox="0 0 14 13" fill="none" stroke="#8d8f93" stroke-width="1.2"><path d="M8 1.6 A5.3 5.3 0 1 0 11.7 6 M11.5 .5 V4.5 M9.5 2.5 H13.5"/><circle cx="4.8" cy="5.8" r=".7" fill="#8d8f93"/><circle cx="8" cy="5.8" r=".7" fill="#8d8f93"/><path d="M4.2 8.2 C5.2 9.6 7.6 9.6 8.6 8.2"/></svg>
<svg style="left:1387px;top:725px" width="10" height="2" viewBox="0 0 10 2" fill="#8d8f93"><circle cx="1" cy="1" r="1"/><circle cx="5" cy="1" r="1"/><circle cx="9" cy="1" r="1"/></svg>
<!-- scrollbar -->
<div class="a" style="left:1583.5px;top:81px;width:6px;height:655px;border-radius:3px;background:#f2f2f2"></div>
<div class="a" style="left:1583.5px;top:634px;width:6px;height:102px;border-radius:0 0 3px 3px;background:#8b8e93"></div>
<!-- who can see -->
<div class="a" style="left:1304px;top:737px;width:288px;height:20px;background:#2a2c2f"></div>
<div class="a" style="left:1304px;top:757px;width:288px;height:1px;background:#3a3c40"></div>
<svg style="left:1315px;top:741px" width="13" height="12" viewBox="0 0 13 12" fill="none" stroke="#9b9b9b" stroke-width="1.1"><circle cx="5" cy="3.2" r="2.3"/><path d="M1 11 V9.5 C1 7.8 2.3 6.8 4 6.8 H6"/><circle cx="9.6" cy="9" r="2.6" fill="#4f8df5" stroke="none"/></svg>
<div class="t" style="transform:scaleX(0.9930);transform-origin:0 0;left:1330px;top:741.75px;font-size:10px;color:#9b9b9b">Кто может видеть ваши сообщения? Запись включена</div>
<!-- to -->
<div class="t" style="transform:scaleX(1.0023);transform-origin:0 0;left:1313px;top:774.15px;font-size:10.3px;color:#e4e4e4">Кому:</div>
<div class="a" style="left:1347.5px;top:769.5px;width:154px;height:18.5px;border-radius:5px;background:#0e72ed"></div>
<div class="t" style="transform:scaleX(0.9716);transform-origin:0 0;left:1353.6px;top:774px;font-size:9.5px;font-weight:bold;color:#fff">Групповой чат конференции</div>
<svg style="left:1488.5px;top:777px" width="7" height="5" viewBox="0 0 7 5"><path d="M.8 .8 L3.5 3.6 L6.2 .8" fill="none" stroke="#fff" stroke-width="1.4"/></svg>
<div class="t" style="transform:scaleX(0.9958);transform-origin:0 0;left:1310px;top:795.75px;font-size:12.5px;color:#e8e8e8">Професіоналізм, відповідальність,</div>
<div class="t" style="transform:scaleX(1.0085);transform-origin:0 0;left:1310px;top:812.25px;font-size:12.5px;color:#e8e8e8">комунікативність</div>
<div class="a" style="left:1409px;top:811px;width:1px;height:15px;background:#e8e8e8"></div>
<!-- compose icons -->
<div class="t" style="left:1316.5px;top:834px;font-size:15px;color:#85878b;font-family:'Liberation Serif',serif">T</div>
<svg style="left:1343px;top:836px" width="12" height="12" viewBox="0 0 12 12" fill="none" stroke="#85878b" stroke-width="1.1"><circle cx="6" cy="6" r="5.3"/><circle cx="4.2" cy="4.8" r=".6" fill="#85878b"/><circle cx="7.8" cy="4.8" r=".6" fill="#85878b"/><path d="M3.6 7.2 C4.6 8.8 7.4 8.8 8.4 7.2"/></svg>
<div class="t" style="left:1369.5px;top:837.5px;font-size:9px;font-weight:bold;color:#9a9ca0;font-family:'Liberation Mono',monospace;letter-spacing:-.6px">GIF</div>
<svg style="left:1398.5px;top:835.5px" width="11" height="13" viewBox="0 0 11 13" fill="none" stroke="#9a9ca0" stroke-width="1.2"><path d="M2.5 .8 H6.5 L10.2 4.5 V10.5 C10.2 11.6 9.5 12.2 8.5 12.2 H2.5 C1.5 12.2 .8 11.6 .8 10.5 V2.5 C.8 1.4 1.5 .8 2.5 .8Z M6.5 .8 V4.5 H10.2"/></svg>
<svg style="left:1425px;top:835.5px" width="13" height="13" viewBox="0 0 13 13" fill="none" stroke="#9a9ca0" stroke-width="1.2"><path d="M10.2 6 V3 C10.2 1.8 9.4 1 8.2 1 H3 C1.8 1 1 1.8 1 3 V8.2 C1 9.4 1.8 10.2 3 10.2 H6 M10.2 8 V12.5 M8 10.2 H12.5"/></svg>
<svg style="left:1448.5px;top:840.5px" width="6" height="4" viewBox="0 0 6 4"><path d="M.6 .6 L3 3 L5.4 .6" fill="none" stroke="#85878b" stroke-width="1.2"/></svg>
<div class="a" style="left:1565px;top:832px;width:20.5px;height:19.5px;border-radius:5px;background:#1a73f0"></div>
<svg style="left:1569.5px;top:836.5px" width="12" height="11" viewBox="0 0 12 11"><path d="M.6 .8 L11.6 .8 L5.6 10.4 L4.8 5.4Z" fill="#fff"/><path d="M4.8 5.4 L8.6 2.8" stroke="#1a73f0" stroke-width="1"/></svg>

<!-- ===== bottom toolbar ===== -->
<div class="a" id="bt"></div>
<!-- mic -->
<svg style="left:33px;top:823px" width="22" height="24" viewBox="0 0 22 24" fill="none" stroke="#f2f2f2" stroke-width="1.4"><rect x="8" y="2" width="6" height="11" rx="3"/><path d="M5 10 C5 14 7.5 16 11 16 C14.5 16 17 14 17 10 M11 16 V21 M7.5 21.3 H14.5"/><path d="M2 19 L19 1" stroke="#e0245e" stroke-width="2.2"/></svg>
<div class="bl" style="transform:translateX(-50%) scaleX(0.9910);transform-origin:50% 0;left:43.3px">Звук</div>
<svg style="left:66px;top:831px" width="8" height="6" viewBox="0 0 8 6"><path d="M1 4.8 L4 1.6 L7 4.8" fill="none" stroke="#e8e8e8" stroke-width="1.4"/></svg>
<!-- video -->
<svg style="left:110px;top:828px" width="22" height="14" viewBox="0 0 22 14" fill="none" stroke="#f2f2f2" stroke-width="1.4"><rect x="0.8" y="0.8" width="13.5" height="12.4" rx="3"/><path d="M15.5 5.2 L20.5 2.4 V11.6 L15.5 8.8"/></svg>
<div class="bl" style="transform:translateX(-50%) scaleX(0.9387);transform-origin:50% 0;left:121px">Видео</div>
<svg style="left:148px;top:831px" width="8" height="6" viewBox="0 0 8 6"><path d="M1 4.8 L4 1.6 L7 4.8" fill="none" stroke="#e8e8e8" stroke-width="1.4"/></svg>
<!-- participants -->
<svg style="left:475px;top:826px" width="17" height="17" viewBox="0 0 17 17" fill="none" stroke="#f2f2f2" stroke-width="1.3"><circle cx="5.5" cy="3.6" r="2.6"/><circle cx="12" cy="6.4" r="2"/><path d="M1 15.5 V13 C1 10.6 2.6 9.2 5.5 9.2 C8.4 9.2 10 10.6 10 13 V15.5Z" stroke-linejoin="round"/><path d="M10.4 10.6 C11 10.3 11.5 10.2 12.2 10.2 C14.6 10.2 16 11.4 16 13.4 V15.5 H10.4"/></svg>
<div class="t" style="left:497px;top:827px;font-size:11px;color:#a8a8a8">90</div>
<div class="bl" style="transform:translateX(-50%) scaleX(0.9892);transform-origin:50% 0;left:483.3px">Участники</div>
<svg style="left:523px;top:831px" width="8" height="6" viewBox="0 0 8 6"><path d="M1 4.8 L4 1.6 L7 4.8" fill="none" stroke="#e8e8e8" stroke-width="1.4"/></svg>
<!-- chat -->
<svg style="left:565px;top:826px" width="20" height="19" viewBox="0 0 20 19" fill="none" stroke="#f2f2f2" stroke-width="1.4" stroke-linejoin="round"><path d="M4 1 H16 C17.8 1 19 2.2 19 4 V10 C19 11.8 17.8 13 16 13 H9 L4.5 17.5 V13 H4 C2.2 13 1 11.8 1 10 V4 C1 2.2 2.2 1 4 1Z"/></svg>
<div class="bl" style="transform:translateX(-50%) scaleX(0.9504);transform-origin:50% 0;left:574.5px">Чат</div>
<svg style="left:599px;top:831px" width="8" height="6" viewBox="0 0 8 6"><path d="M1 4.8 L4 1.6 L7 4.8" fill="none" stroke="#e8e8e8" stroke-width="1.4"/></svg>
<!-- react -->
<svg style="left:642px;top:826px" width="22" height="19" viewBox="0 0 22 19" fill="none" stroke="#f2f2f2" stroke-width="1.4" stroke-linejoin="round"><path d="M11 17.5 C7 14.5 1.5 11 1.5 6.2 C1.5 3.4 3.6 1.4 6.2 1.4 C8.2 1.4 9.8 2.4 11 4.2 C12.2 2.4 13.8 1.4 15.8 1.4 C18.4 1.4 20.5 3.4 20.5 6.2 C20.5 11 15 14.5 11 17.5Z"/></svg>
<div class="bl" style="transform:translateX(-50%) scaleX(0.9788);transform-origin:50% 0;left:653.8px">Отреагировать</div>
<svg style="left:681px;top:831px" width="8" height="6" viewBox="0 0 8 6"><path d="M1 4.8 L4 1.6 L7 4.8" fill="none" stroke="#e8e8e8" stroke-width="1.4"/></svg>
<!-- share -->
<svg style="left:726px;top:827px" width="20" height="16" viewBox="0 0 20 16" fill="none" stroke="#f2f2f2" stroke-width="1.4"><rect x="0.8" y="0.8" width="18.4" height="14.4" rx="2.5"/><path d="M10 12 V4.2 M6.6 7.4 L10 4 L13.4 7.4"/></svg>
<div class="bl" style="transform:translateX(-50%) scaleX(0.9646);transform-origin:50% 0;left:735.8px">Поделиться</div>
<svg style="left:762px;top:831px" width="8" height="6" viewBox="0 0 8 6"><path d="M1 4.8 L4 1.6 L7 4.8" fill="none" stroke="#e8e8e8" stroke-width="1.4"/></svg>
<div class="a" style="left:787px;top:828px;width:1px;height:24px;background:#333"></div>
<!-- settings -->
<svg style="left:821px;top:825px" width="20" height="20" viewBox="0 0 20 20" fill="none" stroke="#f2f2f2" stroke-width="1.4" stroke-linejoin="round"><path d="M8.4 1.2 H11.6 L12.2 3.6 L13.8 4.4 L16 3.2 L18.2 5.8 L16.6 7.6 L17 9.4 L19 10.4 L18.4 13.6 L16 13.8 L15 15.2 L15.8 17.6 L13 19 L11.4 17.2 H8.6 L7 19 L4.2 17.6 L5 15.2 L4 13.8 L1.6 13.6 L1 10.4 L3 9.4 L3.4 7.6 L1.8 5.8 L4 3.2 L6.2 4.4 L7.8 3.6Z"/><circle cx="10" cy="10.2" r="3"/></svg>
<div class="bl" style="transform:translateX(-50%) scaleX(0.9895);transform-origin:50% 0;left:831px">Настройки</div>
<!-- more -->
<svg style="left:897px;top:824px" width="21" height="21" viewBox="0 0 21 21"><circle cx="10.5" cy="10.5" r="9.6" fill="none" stroke="#f2f2f2" stroke-width="1.4"/><circle cx="6.2" cy="10.5" r="1.2" fill="#f2f2f2"/><circle cx="10.5" cy="10.5" r="1.2" fill="#f2f2f2"/><circle cx="14.8" cy="10.5" r="1.2" fill="#f2f2f2"/></svg>
<div class="bl" style="transform:translateX(-50%) scaleX(0.9991);transform-origin:50% 0;left:907.7px">Дополнительно</div>
<!-- leave -->
<svg style="left:1242px;top:822px" width="24" height="24" viewBox="0 0 24 24" fill="none" stroke-linecap="round" stroke-linejoin="round"><path d="M9.5 2.6 H20 Q22 2.6 22 4.6 V19 L14.8 22.8 V7.2 Q14.8 5.8 16 5.2 L21 2.9" stroke="#e0245e" stroke-width="1.5"/><circle cx="8.6" cy="8" r="2.3" stroke="#f2f2f2" stroke-width="1.3" fill="#000"/><path d="M8.4 12 L7.4 16.6 L10.4 19.4 L10.8 22.6 M7.4 16.6 L5.4 19.6 L3 22.6 M8.4 12.4 L11.6 15.6 M8.4 12.4 L4.8 14.4" stroke="#f2f2f2" stroke-width="4"/><path d="M8.4 12 L7.4 16.6 L10.4 19.4 L10.8 22.6 M7.4 16.6 L5.4 19.6 L3 22.6 M8.4 12.4 L11.6 15.6 M8.4 12.4 L4.8 14.4" stroke="#000" stroke-width="1.5"/></svg>
<div class="bl" style="transform:translateX(-50%) scaleX(0.8942);transform-origin:50% 0;left:1253px">Выйти</div>
<!-- ===== taskbar ===== -->
<div class="a" id="tk"></div>
<svg style="left:13px;top:875px" width="14" height="14" viewBox="0 0 14 14" fill="#111"><path d="M0 2 L6 1.1 V6.6 H0Z M6.8 1 L14 0 V6.6 H6.8Z M0 7.4 H6 V12.9 L0 12Z M6.8 7.4 H14 V14 L6.8 13Z"/></svg>
<div class="a" style="left:41px;top:865px;width:238px;height:34px;background:#f4f7fb"></div>
<svg style="left:50px;top:874px" width="15" height="16" viewBox="0 0 15 16" fill="none" stroke="#333" stroke-width="1.4"><circle cx="9" cy="6" r="4.6"/><path d="M5.6 9.6 L1 14.8"/></svg>
<div class="t" style="transform:scaleX(0.9537);transform-origin:0 0;left:73px;top:875px;font-size:14px;color:#3a3a3a">Поиск</div>
<!-- hedgehog art -->
<svg style="left:213px;top:865px" width="66" height="34" viewBox="0 0 66 34"><ellipse cx="36" cy="14" rx="26" ry="14" fill="#e9e3d6"/><path d="M2 34 C6 28 16 27 26 28 C40 26 58 26 64 34Z" fill="#8a8e92"/><path d="M12 27 C10 18 8 10 6 4 M10 16 L4 10 M11 20 L16 12 M9 10 L12 5" stroke="#6d8f6a" stroke-width="1.6" fill="none"/><path d="M22 26 C26 12 40 5 52 9 C60 12 62 22 58 28 C48 30 32 30 22 26Z" fill="#b5651d"/><path d="M22 26 C24 22 28 21 32 23 C34 26 30 29 22 28Z" fill="#6b4a2f"/><path d="M30 20 L36 8 M34 22 L42 7 M40 23 L48 8 M46 24 L54 11 M52 25 L58 15" stroke="#e0a050" stroke-width="1.2"/></svg>
<!-- task view -->
<svg style="left:293px;top:874px" width="15" height="15" viewBox="0 0 15 15" fill="none" stroke="#222" stroke-width="1.3"><rect x="1" y="4.6" width="9" height="6.4"/><path d="M1 1.4 H10 M1 14 H10 M13 1 V3 M13 5.4 V10 M13 12.4 V14.4"/></svg>
<!-- pinned icons -->
<svg style="left:329px;top:872px" width="22" height="20" viewBox="0 0 22 20"><ellipse cx="9" cy="8" rx="7.6" ry="6.6" fill="#2dc100"/><ellipse cx="14.6" cy="12.4" rx="6" ry="5" fill="#e8e8e8"/><path d="M4 13 L3.4 16 L6.6 14.2Z" fill="#2dc100"/></svg>
<svg style="left:366px;top:872px" width="20" height="20" viewBox="0 0 20 20"><circle cx="10" cy="10" r="9.4" fill="#0b5ed7"/><path d="M4 16 L3 19 L7 17.6Z" fill="#0b5ed7"/><text x="10" y="12.6" font-size="7" font-weight="bold" fill="#fff" text-anchor="middle" font-family="Liberation Sans,sans-serif">imo</text></svg>
<svg style="left:401px;top:872px" width="20" height="20" viewBox="0 0 20 20"><circle cx="10" cy="10" r="9.6" fill="#2aa3e0"/><path d="M4.4 9.8 L15 5.6 L13.2 14.6 L9.8 12.2 L8.2 13.8 L8 11.2 L12.6 7.4 L7 10.8Z" fill="#fff"/></svg>
<svg style="left:437px;top:872px" width="22" height="20" viewBox="0 0 22 20" fill="none"><ellipse cx="9" cy="7" rx="7" ry="4.4" stroke="#e0506a" stroke-width="1.6" transform="rotate(-20 9 7)"/><ellipse cx="13" cy="8" rx="6" ry="4" stroke="#d9a0a8" stroke-width="1.4" transform="rotate(25 13 8)"/><path d="M8 10 L14 17 M14 10 L9 17" stroke="#3a78c9" stroke-width="1.6"/><circle cx="14.6" cy="17.4" r="1.6" stroke="#3a78c9" stroke-width="1.2"/><circle cx="8.6" cy="17.4" r="1.6" stroke="#3a78c9" stroke-width="1.2"/></svg>
<svg style="left:473px;top:871px" width="22" height="22" viewBox="0 0 22 22"><path d="M3 12 C3 7 7 4 12 4 C16 4 19 6 19 9 C19 12 15 11 14 13 C13 15 15 17 12 18 C7 19 3 17 3 12Z" fill="#cfd6df" stroke="#9aa4b0" stroke-width=".8"/><circle cx="7" cy="10" r="1.4" fill="#e0a030"/><circle cx="10.4" cy="7.4" r="1.4" fill="#d0503a"/><circle cx="7.6" cy="14" r="1.4" fill="#3a88d0"/><path d="M10 17 L18 3 L20 4 L12 18Z" fill="#d9a048"/><path d="M18 3 L19.6 0.6 L21 1.6 L20 4Z" fill="#4a7ab8"/></svg>
<svg style="left:510px;top:871px" width="17" height="22" viewBox="0 0 17 22"><rect x="0.5" y="0.5" width="16" height="21" rx="1.5" fill="#5f6b7a"/><rect x="2.4" y="2.4" width="12.2" height="4.4" fill="#5ab4e8"/><g fill="#dfe6ee"><rect x="2.4" y="8.6" width="3.2" height="3"/><rect x="6.9" y="8.6" width="3.2" height="3"/><rect x="11.4" y="8.6" width="3.2" height="3"/><rect x="2.4" y="12.8" width="3.2" height="3"/><rect x="6.9" y="12.8" width="3.2" height="3"/><rect x="2.4" y="17" width="3.2" height="3"/><rect x="6.9" y="17" width="3.2" height="3"/></g><rect x="11.4" y="12.8" width="3.2" height="7.2" fill="#3a8ad8"/></svg>
<svg style="left:544px;top:873px" width="21" height="18" viewBox="0 0 21 18"><rect width="21" height="18" rx="2" fill="#d3141c"/><path d="M3 9 C6 4.6 12 4 17.6 7 C14 8 14 10.6 17.6 11.6 C12 14 6 13.4 3 9Z" fill="#fff"/><circle cx="10.8" cy="9" r="2.6" fill="#d3141c"/></svg>
<svg style="left:577px;top:871px" width="21" height="22" viewBox="0 0 21 22"><path d="M10.5 1 C4.6 1 1.4 3.6 1.4 9.6 C1.4 13.6 2.8 16 5.4 17.2 V21 L8.8 18 C9.4 18.1 9.9 18.1 10.5 18.1 C16.4 18.1 19.6 15.4 19.6 9.6 C19.6 3.6 16.4 1 10.5 1Z" fill="#7d6be8"/><path d="M7 5.4 C6.2 6 6 7 6.6 8.4 C7.8 11 9.8 13 12.6 14.2 C13.8 14.6 14.6 14.2 15.2 13.2 L13.4 11.6 L12.2 12.4 C10.8 11.8 9.6 10.6 9 9.2 L9.8 8 L8.4 5.6Z" fill="#fff"/></svg>
<div class="tl" style="transform:scaleX(0.8827);transform-origin:0 0;left:601.7px">Rakute...</div>
<div class="ul" style="left:575px;width:68px"></div>
<svg style="left:654px;top:872.5px" width="21" height="18.5" viewBox="0 0 21 18.5"><defs><linearGradient id="cpa" x1="0" y1="0" x2="0" y2="1"><stop offset="0" stop-color="#2a78e0"/><stop offset=".5" stop-color="#3cc08a"/><stop offset="1" stop-color="#f2c53a"/></linearGradient><linearGradient id="cpb" x1="0" y1="0" x2="0" y2="1"><stop offset="0" stop-color="#7a5cf0"/><stop offset=".5" stop-color="#e85aa8"/><stop offset="1" stop-color="#f58a3a"/></linearGradient></defs><path d="M7 .6 H12.6 C14 .6 14.8 1.4 15.2 2.6 L16 5.4 H11.4 C10 5.4 9.2 6.2 8.8 7.6 L7 13.6 C6.6 15 5.8 15.6 4.4 15.6 H3 C1.2 15.6 .2 14.2 .8 12.4 L3.6 3.2 C4.2 1.4 5.2 .6 7 .6Z" fill="url(#cpa)"/><path d="M14 17.9 H8.4 C7 17.9 6.2 17.1 5.8 15.9 L5 13.1 H9.6 C11 13.1 11.8 12.3 12.2 10.9 L14 4.9 C14.4 3.5 15.2 2.9 16.6 2.9 H18 C19.8 2.9 20.8 4.3 20.2 6.1 L17.4 15.3 C16.8 17.1 15.8 17.9 14 17.9Z" fill="url(#cpb)"/></svg>
<svg style="left:686px;top:871px" width="23" height="23" viewBox="0 0 23 23"><circle cx="10.6" cy="10.6" r="10" fill="#e33b2e"/><path d="M10.6 10.6 L1.9 5.6 A10 10 0 0 0 6 19.6Z" fill="#2da94f"/><path d="M10.6 10.6 L6 19.6 A10 10 0 0 0 20.4 8.4Z" fill="#fbc116"/><path d="M10.6 10.6 L20.4 8.4 A10 10 0 0 0 1.9 5.6Z" fill="#e33b2e"/><circle cx="10.6" cy="10.6" r="4.6" fill="#fff"/><circle cx="10.6" cy="10.6" r="3.6" fill="#3b7de0"/><circle cx="16.6" cy="16.8" r="5.6" fill="#1d4e9e"/><text x="16.6" y="19.4" font-size="7" font-weight="bold" fill="#fff" text-anchor="middle" font-family="Liberation Sans,sans-serif">S</text></svg>
<div class="tl" style="transform:scaleX(0.9115);transform-origin:0 0;left:711.7px">Вебіна...</div>
<div class="ul" style="left:686px;width:67px"></div>
<svg style="left:763px;top:871px" width="20" height="22" viewBox="0 0 20 22"><ellipse cx="10" cy="11" rx="9.4" ry="10.4" fill="#e0182d"/><ellipse cx="10" cy="11" rx="4.2" ry="7.4" fill="#d9e5f2"/></svg>
<div class="tl" style="transform:scaleX(0.8725);transform-origin:0 0;left:786.6px">LOBO...</div>
<div class="ul" style="left:761px;width:67px"></div>
<svg style="left:839px;top:871px" width="16" height="22" viewBox="0 0 16 22"><path d="M1 3 C1 1.6 1.6 1 3 1 H10 L15 4 V21 H3 C1.6 21 1 20.4 1 19Z" fill="#f2c84a"/><path d="M10 1 L15 4 V21 H10Z" fill="#f7e3a0"/></svg>
<div class="tl" style="transform:scaleX(0.8403);transform-origin:0 0;left:861.5px">ПЕРЕК...</div>
<div class="ul" style="left:836px;width:67px"></div>
<svg style="left:911px;top:871px" width="22" height="22" viewBox="0 0 22 22"><path d="M11 1 C5.4 1 1.2 5.2 1.2 10.8 C1.2 12.8 1.8 14.6 2.8 16.2 L1.2 21 L6.2 19.4 C7.6 20.2 9.2 20.6 11 20.6 C16.6 20.6 20.8 16.4 20.8 10.8 C20.8 5.2 16.6 1 11 1Z" fill="#2bb741"/><path d="M11 2.8 C6.4 2.8 3 6.4 3 10.8 C3 12.6 3.6 14.2 4.6 15.6 L3.8 18.4 L6.8 17.6 C8 18.4 9.4 18.8 11 18.8 C15.6 18.8 19 15.2 19 10.8 C19 6.4 15.6 2.8 11 2.8Z" fill="#fff"/><path d="M11 4 C7.2 4 4.2 7 4.2 10.8 C4.2 14.6 7.2 17.6 11 17.6 C14.8 17.6 17.8 14.6 17.8 10.8 C17.8 7 14.8 4 11 4Z" fill="#2bb741"/><path d="M8 7 C7.4 7.6 7.2 8.4 7.6 9.6 C8.6 12 10.2 13.6 12.4 14.4 C13.4 14.8 14.2 14.4 14.6 13.6 L13 12.4 L12.2 13 C11 12.4 10 11.4 9.6 10.4 L10.2 9.4 L9 7.2Z" fill="#fff"/></svg>
<div class="tl" style="transform:scaleX(0.9035);transform-origin:0 0;left:936.8px">Whats...</div>
<div class="ul" style="left:911px;width:67px"></div>
<svg style="left:985px;top:872px" width="23" height="21" viewBox="0 0 23 21"><circle cx="13" cy="10.5" r="9.6" fill="#e8643c"/><path d="M13 0.9 A9.6 9.6 0 0 1 22.6 10.5 H13Z" fill="#f59a78"/><rect x="0.6" y="4.6" width="12" height="12" rx="1.4" fill="#c43e1c"/><text x="6.6" y="14.2" font-size="9.5" font-weight="bold" fill="#fff" text-anchor="middle" font-family="Liberation Sans,sans-serif">P</text></svg>
<div class="tl" style="transform:scaleX(0.8740);transform-origin:0 0;left:1012px">ГОСТЬ...</div>
<div class="ul" style="left:986px;width:67px"></div>
<svg style="left:1064px;top:873px" width="19" height="19" viewBox="0 0 19 19"><rect width="19" height="19" rx="3" fill="#2f7de0"/><path d="M0 16 L7.6 7 L13.6 14 L16 11.4 L19 15 V16 C19 18 18 19 16 19 H3 C1 19 0 18 0 16Z" fill="#8fd0f8"/><circle cx="13.8" cy="5" r="2" fill="#d6ecff"/></svg>
<div class="tl" style="transform:scaleX(0.9301);transform-origin:0 0;left:1086.3px">зобра...</div>
<div class="ul" style="left:1061px;width:67px"></div>
<div class="a" style="left:1131px;top:865px;width:74px;height:34px;background:#eef3f9"></div>
<svg style="left:1137px;top:872px" width="21" height="21" viewBox="0 0 21 21"><circle cx="10.5" cy="10.5" r="10.2" fill="#1f5fe6"/><text x="10.5" y="13.6" font-size="9" font-weight="bold" fill="#fff" text-anchor="middle" font-family="Liberation Sans,sans-serif" letter-spacing="-0.5">zm</text></svg>
<div class="tl" style="transform:scaleX(0.9269);transform-origin:0 0;left:1162px">Zoom ...</div>
<div class="ul" style="left:1131px;width:74px;background:#1b6fd4"></div>
<svg style="left:1212px;top:872px" width="22" height="21" viewBox="0 0 22 21"><rect x="6" y="0.6" width="15.4" height="19.8" rx="1.4" fill="#2b7cd3"/><rect x="6" y="10.5" width="15.4" height="5" fill="#185abd"/><rect x="6" y="15.4" width="15.4" height="5" rx="1" fill="#103f91"/><rect x="0.6" y="4.6" width="12" height="12" rx="1.4" fill="#185abd"/><text x="6.6" y="14" font-size="8.5" font-weight="bold" fill="#fff" text-anchor="middle" font-family="Liberation Sans,sans-serif">W</text></svg>
<div class="tl" style="transform:scaleX(0.9848);transform-origin:0 0;left:1236px">Докум...</div>
<div class="ul" style="left:1210px;width:68px"></div>
<!-- tray -->
<svg style="left:1310px;top:875.5px" width="20" height="13" viewBox="0 0 22 15"><path d="M5.4 14.4 C2.4 14.4 0.6 12.6 0.6 10.4 C0.6 8.2 2.2 6.6 4.4 6.4 C5 3.2 7.6 1 10.8 1 C13.8 1 16.2 2.8 17 5.6 C19.6 5.8 21.4 7.6 21.4 10 C21.4 12.6 19.4 14.4 16.6 14.4Z" fill="#a9c9f2" stroke="#86b0ea" stroke-width=".8"/><path d="M5 8 C6 5 8 3.4 10.8 3.4 C12.6 3.4 14 4.2 15 5.6 C11 5 8 6 5 8Z" fill="#dbe9fb"/></svg>
<div class="t" style="transform:scaleX(0.8527);transform-origin:0 0;left:1336.7px;top:876.35px;font-size:12.3px;color:#222">6°C</div>
<svg style="left:1375px;top:877px" width="11" height="8" viewBox="0 0 11 8"><path d="M1 6.6 L5.5 1.6 L10 6.6" fill="none" stroke="#222" stroke-width="1.3"/></svg>
<svg style="left:1394px;top:874px" width="14" height="15" viewBox="0 0 14 15"><path d="M1 14 C3 9 8 3 13 1 C11.4 6 7 11 1 14Z" fill="#a765d8"/></svg>
<svg style="left:1415px;top:875.5px" width="12" height="13" viewBox="0 0 13 14"><path d="M6.5 0.6 C2.8 0.6 0.8 2.4 0.8 6 C0.8 8.6 1.8 10 3.4 10.8 V13.4 L5.6 11.4 H6.5 C10.2 11.4 12.2 9.6 12.2 6 C12.2 2.4 10.2 0.6 6.5 0.6Z" fill="#7d5cf0"/><path d="M4.6 3.4 C4 4.6 4.6 6.4 6 7.6 C7 8.4 8.4 8.8 9 8" fill="none" stroke="#fff" stroke-width="1.3"/></svg>
<svg style="left:1434.5px;top:876.5px" width="14" height="13" viewBox="0 0 15 15" fill="none" stroke="#222" stroke-width="1.2"><rect x="3.6" y="1" width="10.8" height="8"/><path d="M9 9 V12.4 M5.6 12.8 H12.4 M0.8 3 V12.8 H4"/></svg>
<svg style="left:1454px;top:877px" width="13.5" height="11.5" viewBox="0 0 15 13" fill="none" stroke="#222" stroke-width="1.1"><path d="M1 4.4 H3.4 L6.6 1.4 V11.6 L3.4 8.6 H1Z"/><path d="M8.6 4.6 C9.4 5.6 9.4 7.4 8.6 8.4"/><path d="M10.6 3 C12 4.6 12 8.4 10.6 10" stroke="#777"/><path d="M12.6 1.6 C14.4 4 14.4 9 12.6 11.4" stroke="#aaa"/></svg>
<div class="t" style="transform:scaleX(0.8350);transform-origin:0 0;left:1476.8px;top:877.1px;font-size:10.8px;color:#222">УКР</div>
<div class="t" style="transform:scaleX(0.8139);transform-origin:0 0;left:1517.3px;top:869.6px;font-size:10.8px;color:#222">15:33</div>
<div class="t" style="transform:scaleX(0.8289);transform-origin:0 0;left:1506.2px;top:884.6px;font-size:10.8px;color:#222">19.03.2026</div>
<svg style="left:1565px;top:875px" width="22" height="19" viewBox="0 0 22 19"><path d="M1 1 H13 V10 H6 L3.4 12.4 V10 H1Z" fill="#111"/><path d="M3 3.4 H11 M3 5.4 H11 M3 7.4 H11" stroke="#d9e5f2" stroke-width=".9"/><circle cx="14.6" cy="11.6" r="6" fill="#d9e5f2" stroke="#222" stroke-width="1"/><text x="14.6" y="14.6" font-size="8" fill="#111" text-anchor="middle" font-family="Liberation Sans,sans-serif">12</text></svg>
</body></html>
